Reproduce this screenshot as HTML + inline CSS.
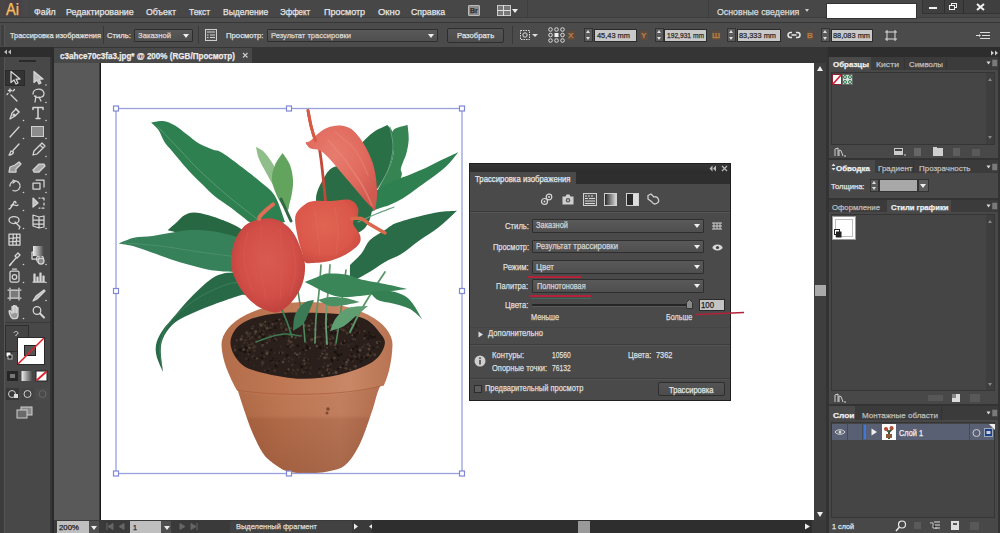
<!DOCTYPE html>
<html><head><meta charset="utf-8">
<style>
*{margin:0;padding:0;box-sizing:border-box}
html,body{width:1000px;height:533px;overflow:hidden;background:#474747;font-family:"Liberation Sans",sans-serif;color:#e6e6e6}
.a{position:absolute}
.t{position:absolute;white-space:pre;line-height:1;transform-origin:0 0;-webkit-text-stroke:0.25px currentColor}
.dd{position:absolute;background:linear-gradient(#595959,#4f4f4f);border:1px solid #2e2e2e;border-radius:1px}
.inp{position:absolute;background:#c9c9c9;border:1px solid #2a2a2a}
.tri{position:absolute;width:0;height:0;border-left:3px solid transparent;border-right:3px solid transparent;border-top:4px solid #eee}
.btn{position:absolute;background:linear-gradient(#545454,#4c4c4c);border:1px solid #2e2e2e;border-radius:2px}
.sep{position:absolute;background:#393939}
svg{position:absolute;overflow:visible}
</style></head><body>
<!-- ============ MENU BAR ============ -->
<div class="a" style="left:0;top:0;width:1000px;height:17px;background:#474747"></div>
<div class="a" style="left:0;top:17px;width:1000px;height:1px;background:#3d3d3d"></div>
<div class="a" style="left:0;top:18px;width:1000px;height:4px;background:#4e4e4e"></div>
<div class="a" style="left:0;top:22px;width:1000px;height:1px;background:#363636"></div>
<!-- Ai logo -->
<div class="a" style="left:0;top:0;width:27px;height:17px;background:linear-gradient(90deg,#4a4544,#443f48 60%,#4a4a4a)"></div>
<div class="t" style="left:5.5px;top:2px;font-size:16px;color:#eebc66;transform:scaleX(0.92);text-shadow:0 0 1px #a06a20">Ai</div>
<!-- Br / layout icons -->
<div class="a" style="left:468px;top:5px;width:12px;height:11px;background:#8d8d8d;border:1px solid #bbb;border-radius:1px"></div>
<div class="t" style="left:470px;top:7px;font-size:7px;font-weight:bold;color:#333">Br</div>
<div class="a" style="left:497px;top:5px;width:14px;height:11px;border:1px solid #c8c8c8;background:#777"></div>
<div class="a" style="left:503px;top:5px;width:1px;height:11px;background:#ddd"></div>
<div class="a" style="left:497px;top:10px;width:14px;height:1px;background:#ddd"></div>
<div class="tri" style="left:512px;top:9px;border-left-width:3px;border-right-width:3px;border-top-width:4px"></div>
<div class="a" style="left:527px;top:0;width:1px;height:17px;background:#3e3e3e"></div>
<div class="a" style="left:708px;top:0;width:1px;height:17px;background:#3e3e3e"></div>
<div class="tri" style="left:805px;top:9px;border-left-width:2.5px;border-right-width:2.5px;border-top-width:3px;border-top-color:#ccc"></div>
<!-- search box -->
<div class="a" style="left:826px;top:3px;width:91px;height:16px;background:#fff;border:1px solid #333"></div>
<!-- window buttons -->
<div class="a" style="left:922px;top:0;width:78px;height:14px;background:#3f3f3f;border-left:1px solid #333;border-bottom:1px solid #333"></div>
<div class="a" style="left:944px;top:0;width:1px;height:13px;background:#2e2e2e"></div>
<div class="a" style="left:963px;top:0;width:1px;height:13px;background:#2e2e2e"></div>
<div class="a" style="left:929px;top:7px;width:8px;height:2px;background:#f2f2f2"></div>
<div class="a" style="left:951px;top:3px;width:6px;height:5px;border:1.5px solid #f2f2f2"></div>
<div class="a" style="left:949px;top:5px;width:6px;height:5px;border:1.5px solid #f2f2f2;background:#3f3f3f"></div>
<svg style="left:976px;top:3px" width="9" height="8"><path d="M1 1L8 7M8 1L1 7" stroke="#f2f2f2" stroke-width="2"/></svg>

<!-- ============ CONTROL BAR ============ -->
<div class="a" style="left:0;top:23px;width:1000px;height:24px;background:#4b4b4b"></div>
<div class="a" style="left:1px;top:25px;width:4px;height:21px;background:#3f3f3f;border-right:1px solid #555"></div>
<div class="sep" style="left:103px;top:26px;width:1px;height:18px"></div>
<div class="dd" style="left:134px;top:29px;width:59px;height:13px"></div>
<div class="tri" style="left:183px;top:34px"></div>
<div class="sep" style="left:198px;top:26px;width:1px;height:18px"></div>
<svg style="left:205px;top:29px" width="12" height="12"><rect x="0.5" y="0.5" width="11" height="11" fill="#555" stroke="#cfcfcf"/><path d="M2 3h8M5 6h5M5 8.5h5M2 6h1.5M2 8.5h1.5" stroke="#cfcfcf"/></svg>
<div class="dd" style="left:267px;top:29px;width:171px;height:13px"></div>
<div class="tri" style="left:428px;top:34px"></div>
<div class="btn" style="left:447px;top:28px;width:57px;height:15px"></div>
<div class="sep" style="left:512px;top:26px;width:1px;height:18px"></div>
<svg style="left:519px;top:29px" width="22" height="12"><rect x="1.5" y="1.5" width="9" height="9" fill="none" stroke="#ddd" stroke-dasharray="1.5 1"/><circle cx="6" cy="6" r="2.2" fill="none" stroke="#ddd"/><path d="M13 5h6l-3 3z" fill="#ddd"/></svg>
<svg style="left:548px;top:27px" width="17" height="16"><g fill="none" stroke="#ddd" stroke-width="1"><circle cx="2.5" cy="2.5" r="1.8"/><circle cx="8.5" cy="2.5" r="1.8"/><circle cx="14.5" cy="2.5" r="1.8"/><circle cx="2.5" cy="8" r="1.8"/><circle cx="14.5" cy="8" r="1.8"/><circle cx="2.5" cy="13.5" r="1.8"/><circle cx="8.5" cy="13.5" r="1.8"/><circle cx="14.5" cy="13.5" r="1.8"/></g><rect x="6.5" y="6" width="4" height="4" fill="#eee"/></svg>
<div class="a" style="left:567px;top:31px;width:8px;height:9px;background:#5a4c40"></div>
<div class="t" style="left:568px;top:32px;font-size:8px;color:#b87a40;font-weight:bold">X</div>
<div class="a" style="left:584px;top:28px;width:9px;height:14px;background:#5a5a5a;border:1px solid #333"></div>
<div class="tri" style="left:586px;top:30px;border-top:0;border-bottom:3px solid #ddd;border-left-width:2.5px;border-right-width:2.5px"></div>
<div class="tri" style="left:586px;top:37px;border-top-width:3px;border-left-width:2.5px;border-right-width:2.5px;border-top-color:#ddd"></div>
<div class="inp" style="left:594px;top:29px;width:43px;height:13px"></div>
<div class="a" style="left:640px;top:31px;width:8px;height:9px;background:#5a4c40"></div>
<div class="t" style="left:641px;top:32px;font-size:8px;color:#b87a40;font-weight:bold">Y</div>
<div class="a" style="left:655px;top:28px;width:9px;height:14px;background:#5a5a5a;border:1px solid #333"></div>
<div class="tri" style="left:657px;top:30px;border-top:0;border-bottom:3px solid #ddd;border-left-width:2.5px;border-right-width:2.5px"></div>
<div class="tri" style="left:657px;top:37px;border-top-width:3px;border-left-width:2.5px;border-right-width:2.5px;border-top-color:#ddd"></div>
<div class="inp" style="left:664px;top:29px;width:43px;height:13px"></div>
<div class="a" style="left:712px;top:31px;width:8px;height:9px;background:#5a4c40"></div>
<div class="t" style="left:712px;top:32px;font-size:8px;color:#b87a40;font-weight:bold">Ш</div>
<div class="a" style="left:727px;top:28px;width:9px;height:14px;background:#5a5a5a;border:1px solid #333"></div>
<div class="tri" style="left:729px;top:30px;border-top:0;border-bottom:3px solid #ddd;border-left-width:2.5px;border-right-width:2.5px"></div>
<div class="tri" style="left:729px;top:37px;border-top-width:3px;border-left-width:2.5px;border-right-width:2.5px;border-top-color:#ddd"></div>
<div class="inp" style="left:737px;top:29px;width:44px;height:13px"></div>
<svg style="left:787px;top:30px" width="14" height="10"><path d="M5 2.5H3.5a2.5 2.5 0 0 0 0 5H5M9 2.5h1.5a2.5 2.5 0 0 1 0 5H9M4.5 5h5" fill="none" stroke="#e8e8e8" stroke-width="1.5"/></svg>
<div class="a" style="left:807px;top:31px;width:6px;height:9px;background:#5a4c40"></div>
<div class="t" style="left:807px;top:32px;font-size:8px;color:#b87a40;font-weight:bold">В</div>
<div class="a" style="left:821px;top:28px;width:9px;height:14px;background:#5a5a5a;border:1px solid #333"></div>
<div class="tri" style="left:823px;top:30px;border-top:0;border-bottom:3px solid #ddd;border-left-width:2.5px;border-right-width:2.5px"></div>
<div class="tri" style="left:823px;top:37px;border-top-width:3px;border-left-width:2.5px;border-right-width:2.5px;border-top-color:#ddd"></div>
<div class="inp" style="left:831px;top:29px;width:42px;height:13px"></div>
<svg style="left:885px;top:30px" width="12" height="11"><rect x="2" y="2" width="8" height="7" fill="none" stroke="#ddd"/><path d="M0 2h2M10 2h2M0 9h2M10 9h2M2 0v2M10 0v2M2 9v2M10 9v2" stroke="#ddd"/></svg>
<svg style="left:976px;top:31px" width="15" height="9"><path d="M0 4.5h3M4 1.5h10M6 4.5h8M4 7.5h10" stroke="#ddd" stroke-width="1.2"/><path d="M3 3l2 1.5-2 1.5z" fill="#ddd"/></svg>

<!-- ============ DOC TAB BAR ============ -->
<div class="a" style="left:54px;top:47px;width:774px;height:16px;background:#353535"></div>
<div class="a" style="left:54px;top:48px;width:198px;height:15px;background:#484848"></div>
<svg style="left:242px;top:52px" width="7" height="7"><path d="M1 1L5.5 5.5M5.5 1L1 5.5" stroke="#cfcfcf" stroke-width="1.1"/></svg>

<!-- ============ CANVAS ============ -->
<div class="a" style="left:54px;top:63px;width:760px;height:457px;background:#595959"></div>
<div class="a" style="left:99px;top:63px;width:1px;height:457px;background:#3a3a3a"></div><div class="a" style="left:100px;top:63px;width:1px;height:457px;background:#1a1a1a"></div>
<div class="a" style="left:101px;top:63px;width:713px;height:457px;background:#fff"></div>
<!-- ============ PLANT ============ -->
<svg style="left:0;top:0" width="1000" height="533" viewBox="0 0 1000 533">
<defs>
<linearGradient id="potb" x1="0" x2="1"><stop offset="0" stop-color="#a8623f"/><stop offset="0.3" stop-color="#b8714d"/><stop offset="0.7" stop-color="#bf7c5c"/><stop offset="1" stop-color="#ab6748"/></linearGradient>
<linearGradient id="potv" x1="0" y1="0" x2="0" y2="1"><stop offset="0" stop-color="#d49470" stop-opacity="0.2"/><stop offset="0.38" stop-color="#d49470" stop-opacity="0.1"/><stop offset="0.43" stop-color="#8a4a30" stop-opacity="0.2"/><stop offset="1" stop-color="#7a4028" stop-opacity="0.35"/></linearGradient>
<radialGradient id="sp1" cx="0.5" cy="0.45" r="0.6"><stop offset="0" stop-color="#d95b50"/><stop offset="0.65" stop-color="#d14e47"/><stop offset="1" stop-color="#bb3f3a"/></radialGradient>
<radialGradient id="sp2" cx="0.45" cy="0.4" r="0.65"><stop offset="0" stop-color="#e06452"/><stop offset="0.7" stop-color="#da5749"/><stop offset="1" stop-color="#c94a40"/></radialGradient>
<radialGradient id="sp3" cx="0.4" cy="0.35" r="0.7"><stop offset="0" stop-color="#e77c6e"/><stop offset="0.6" stop-color="#e06a5e"/><stop offset="1" stop-color="#d05a50"/></radialGradient>
<linearGradient id="potr" x1="0" x2="1"><stop offset="0" stop-color="#b26d4a"/><stop offset="0.35" stop-color="#c07854"/><stop offset="0.75" stop-color="#c88766"/><stop offset="1" stop-color="#b87352"/></linearGradient>
</defs>
<path d="M387.3,125.1 C385.1,126.2 377.6,129.4 373.8,131.9 C370.1,134.4 368.4,136.0 364.8,139.8 C361.2,143.7 356.1,150.0 352.0,155.0 C347.9,160.0 343.7,163.3 340.0,170.0 C336.3,176.7 332.0,187.5 330.0,195.0 C328.0,202.5 328.3,211.7 328.0,215.0 C330.8,216.7 339.3,225.5 345.0,225.0 C350.7,224.5 356.7,217.9 362.0,212.0 C367.3,206.1 373.5,194.6 377.0,189.3 C380.5,184.0 380.5,184.4 382.8,180.3 C385.1,176.2 388.8,169.8 390.7,164.5 C392.6,159.2 393.6,154.1 394.0,148.8 C394.4,143.6 394.1,136.9 393.0,133.0 C391.9,129.1 388.2,126.4 387.3,125.1 Z" fill="#2a7046" />
<path d="M407.6,125.1 C405.2,126.0 395.3,126.9 393.0,130.8 C390.7,134.8 394.4,143.2 394.0,148.8 C393.6,154.4 392.6,159.2 390.7,164.5 C388.8,169.8 385.1,175.2 382.8,180.3 C380.5,185.4 376.6,190.9 377.0,195.0 C377.4,199.1 383.7,203.3 385.0,205.0 C387.6,200.5 398.2,184.0 400.8,178.0 C403.4,172.0 400.4,171.6 400.8,169.0 C401.2,166.4 402.1,164.9 403.0,162.3 C403.9,159.7 405.4,157.1 406.4,153.3 C407.3,149.6 408.5,144.5 408.7,139.8 C408.9,135.1 407.8,127.5 407.6,125.1 Z" fill="#358452" />
<path d="M390.0,127.0 C390.5,130.5 393.3,140.8 393.0,148.0 C392.7,155.2 390.5,163.3 388.0,170.0 C385.5,176.7 379.7,185.0 378.0,188.0" fill="none" stroke="#6aa584" stroke-width="0.9" stroke-linecap="round" />
<path d="M458.2,152.2 C455.4,153.5 446.8,157.4 441.4,160.0 C436.0,162.6 430.9,165.6 425.6,168.0 C420.3,170.4 413.9,173.0 409.8,174.7 C405.7,176.4 404.9,176.3 400.8,178.0 C396.7,179.7 390.1,182.2 385.0,185.0 C379.9,187.8 375.0,191.7 370.0,195.0 C365.0,198.3 357.5,203.3 355.0,205.0 C354.5,207.8 348.5,221.2 352.0,222.0 C355.5,222.8 369.8,212.4 376.0,209.6 C382.2,206.8 385.0,206.9 389.5,205.0 C394.0,203.1 398.1,201.3 403.0,198.3 C407.9,195.3 413.5,190.8 418.8,187.0 C424.1,183.2 429.7,179.6 434.6,175.8 C439.5,172.1 444.1,168.4 448.0,164.5 C451.9,160.6 456.5,154.2 458.2,152.2 Z" fill="#2f8050" />
<path d="M316.0,199.0 C316.0,190.8 322.0,181.3 325.0,176.0 C328.0,170.7 330.7,168.3 334.0,167.0 C337.3,165.7 340.7,165.0 345.0,168.0 C349.3,171.0 355.5,178.8 360.0,185.0 C364.5,191.2 371.2,197.8 372.0,205.0 C372.8,212.2 369.5,223.0 365.0,228.0 C360.5,233.0 351.7,235.5 345.0,235.0 C338.3,234.5 329.8,231.0 325.0,225.0 C320.2,219.0 316.0,207.2 316.0,199.0 Z" fill="#2a6c45" />
<path d="M358.0,222.0 C361.0,220.7 370.0,216.5 376.0,214.0 C382.0,211.5 391.0,208.2 394.0,207.0" fill="none" stroke="#6aa584" stroke-width="1.2" stroke-linecap="round" />
<path d="M457.0,210.7 C454.4,210.9 447.8,210.9 441.4,211.8 C435.0,212.8 426.3,214.5 418.8,216.4 C411.3,218.3 401.9,220.8 396.3,223.0 C390.7,225.2 389.4,227.1 385.0,229.9 C380.6,232.7 373.9,236.2 370.0,240.0 C366.1,243.8 365.1,248.8 361.8,253.0 C358.5,257.2 352.0,263.0 350.0,265.0 C350.3,267.5 348.9,278.6 351.7,280.0 C354.5,281.4 361.3,276.5 366.9,273.5 C372.4,270.5 379.1,265.4 385.0,262.0 C390.9,258.6 396.6,257.0 402.4,253.3 C408.2,249.6 414.1,244.2 420.0,240.0 C425.9,235.8 431.6,232.9 437.8,228.0 C444.0,223.1 453.8,213.6 457.0,210.7 Z" fill="#2a6c47" />
<path d="M151.0,122.5 C153.0,122.2 159.0,120.5 163.0,121.0 C167.0,121.5 171.0,123.2 175.0,125.5 C179.0,127.8 183.0,131.5 187.0,134.5 C191.0,137.5 194.7,141.0 199.0,143.5 C203.3,146.0 208.7,147.9 212.6,149.5 C216.5,151.1 217.1,149.7 222.5,153.0 C227.9,156.3 238.8,164.8 245.0,169.5 C251.2,174.2 255.7,178.0 260.0,181.5 C264.3,185.0 267.8,187.4 270.6,190.5 C273.4,193.6 274.6,194.8 277.0,200.0 C279.4,205.2 283.7,218.3 285.0,222.0 C281.2,223.0 267.9,228.0 262.0,228.0 C256.1,228.0 252.6,223.8 249.5,222.0 C246.4,220.2 246.8,220.0 243.5,217.5 C240.2,215.0 234.8,210.5 230.0,207.0 C225.2,203.5 219.7,200.3 215.0,196.5 C210.3,192.7 206.4,188.3 202.0,184.0 C197.6,179.7 192.2,174.5 188.5,170.5 C184.8,166.5 182.2,163.2 179.5,160.0 C176.8,156.8 174.5,154.0 172.0,151.0 C169.5,148.0 166.8,145.5 164.5,142.0 C162.2,138.5 160.8,133.2 158.5,130.0 C156.2,126.8 152.2,123.8 151.0,122.5 Z" fill="#2f8050" />
<path d="M158.0,127.0 C161.7,130.8 173.0,142.7 180.0,150.0 C187.0,157.3 192.0,163.3 200.0,171.0 C208.0,178.7 218.5,188.0 228.0,196.0 C237.5,204.0 252.2,215.2 257.0,219.0" fill="none" stroke="#5c9b77" stroke-width="0.9" stroke-linecap="round" />
<path d="M256.0,147.0 C256.5,149.0 257.3,154.8 259.0,159.0 C260.7,163.2 263.6,168.0 266.0,172.5 C268.4,177.0 271.0,181.6 273.5,186.0 C276.0,190.4 278.5,195.0 281.0,199.0 C283.5,203.0 287.3,208.2 288.6,210.0 C288.7,208.3 289.6,203.7 289.0,200.0 C288.4,196.3 286.7,192.2 285.0,188.0 C283.3,183.8 281.3,179.5 279.0,175.0 C276.7,170.5 273.7,165.0 271.0,161.0 C268.3,157.0 265.5,153.3 263.0,151.0 C260.5,148.7 257.2,147.7 256.0,147.0 Z" fill="#8fbe8a" />
<path d="M282.6,153.0 C281.3,155.0 276.8,160.5 275.0,165.0 C273.2,169.5 271.5,174.5 272.0,180.0 C272.5,185.5 275.5,192.7 278.0,198.0 C280.5,203.3 285.5,209.7 287.0,212.0 C287.8,209.2 290.6,200.3 291.6,195.0 C292.6,189.7 293.3,185.0 293.0,180.0 C292.7,175.0 291.7,169.5 290.0,165.0 C288.3,160.5 283.8,155.0 282.6,153.0 Z" fill="#62a35e" />
<path d="M281.0,199.0 C281.8,200.8 284.3,206.3 286.0,210.0 C287.7,213.7 290.2,219.2 291.0,221.0" fill="none" stroke="#2f6a45" stroke-width="3" stroke-linecap="round" />
<path d="M167.5,230.3 C169.1,228.9 174.2,224.5 177.0,222.0 C179.8,219.5 181.6,216.9 184.4,215.3 C187.2,213.7 189.7,212.5 193.8,212.5 C197.9,212.5 203.2,213.7 208.8,215.3 C214.4,216.9 222.6,220.0 227.6,222.0 C232.6,224.0 235.1,225.2 238.8,227.5 C242.5,229.8 248.1,234.6 250.0,236.0 C249.2,238.3 253.3,249.7 245.0,250.0 C236.7,250.3 212.9,241.3 200.0,238.0 C187.1,234.7 172.9,231.6 167.5,230.3 Z" fill="#276842" />
<path d="M118.8,243.5 C121.3,242.6 128.2,239.1 133.8,237.8 C139.4,236.6 146.6,236.8 152.5,236.0 C158.4,235.2 163.2,234.0 169.4,233.0 C175.7,232.0 182.8,230.3 190.0,230.0 C197.2,229.7 204.8,230.1 212.6,231.3 C220.4,232.5 229.9,234.7 237.0,237.0 C244.1,239.3 252.0,243.7 255.0,245.0 C254.5,249.2 255.3,265.6 252.0,270.0 C248.7,274.4 239.1,271.3 235.0,271.6 C230.9,271.9 232.0,271.9 227.6,271.6 C223.2,271.3 215.1,270.8 208.8,269.7 C202.5,268.6 196.2,266.7 190.0,265.0 C183.8,263.3 177.6,261.4 171.3,259.4 C165.1,257.4 158.8,255.0 152.5,252.8 C146.2,250.6 139.4,247.9 133.8,246.3 C128.2,244.8 121.3,244.0 118.8,243.5 Z" fill="#36805a" />
<path d="M125.0,243.0 C130.8,243.5 147.5,244.5 160.0,246.0 C172.5,247.5 185.8,250.0 200.0,252.0 C214.2,254.0 237.5,257.0 245.0,258.0" fill="none" stroke="#5c9a78" stroke-width="0.8" stroke-linecap="round" opacity="0.7"/>
<path d="M163.0,372.0 C161.9,369.3 157.6,360.6 156.5,355.7 C155.4,350.8 155.4,347.1 156.5,342.8 C157.6,338.5 160.1,334.1 163.0,329.8 C165.9,325.5 169.9,321.5 173.8,316.8 C177.8,312.1 182.4,306.4 186.7,301.7 C191.0,297.0 195.4,292.8 199.7,288.8 C204.0,284.9 208.6,280.5 212.6,278.0 C216.6,275.5 220.2,274.5 223.4,273.6 C226.6,272.7 228.4,272.9 232.0,272.6 C235.6,272.3 242.8,272.1 245.0,272.0 C245.5,275.5 248.7,289.1 248.0,293.0 C247.3,296.9 245.1,293.8 240.7,295.2 C236.2,296.6 227.4,299.5 221.3,301.7 C215.2,303.9 210.1,305.7 204.0,308.2 C197.9,310.7 190.0,313.9 184.6,316.8 C179.2,319.7 175.2,321.9 171.6,325.5 C168.0,329.1 164.8,334.1 163.0,338.4 C161.2,342.7 160.8,345.8 160.8,351.4 C160.8,357.0 162.6,368.6 163.0,372.0 Z" fill="#286a47" />
<path d="M162.0,368.0 C161.7,364.2 158.7,352.7 160.0,345.0 C161.3,337.3 164.2,329.5 170.0,322.0 C175.8,314.5 185.8,306.2 195.0,300.0 C204.2,293.8 216.8,288.0 225.0,285.0 C233.2,282.0 240.8,282.5 244.0,282.0" fill="none" stroke="#4f8a68" stroke-width="0.8" stroke-linecap="round" opacity="0.7"/>
<path d="M236.7,386.5 C237.9,390.3 241.3,401.7 243.9,409.3 C246.5,416.9 249.1,424.8 252.2,432.0 C255.3,439.2 259.1,447.4 262.5,452.6 C265.9,457.8 268.8,459.9 272.9,463.0 C277.0,466.1 281.4,469.5 287.3,471.2 C293.2,472.9 301.1,473.3 308.0,473.3 C314.9,473.3 322.4,472.6 328.6,471.2 C334.8,469.8 340.0,469.5 345.2,465.0 C350.4,460.5 355.1,453.3 359.6,444.4 C364.1,435.4 368.9,420.2 372.0,411.3 C375.1,402.4 376.1,396.2 378.2,390.7 C380.3,385.2 383.4,380.4 384.4,378.3 C372.0,380.6 334.6,390.6 310.0,392.0 C285.4,393.4 248.9,387.4 236.7,386.5 Z" fill="url(#potb)"/>
<path d="M236.7,386.5 C237.9,390.3 241.3,401.7 243.9,409.3 C246.5,416.9 249.1,424.8 252.2,432.0 C255.3,439.2 259.1,447.4 262.5,452.6 C265.9,457.8 268.8,459.9 272.9,463.0 C277.0,466.1 281.4,469.5 287.3,471.2 C293.2,472.9 301.1,473.3 308.0,473.3 C314.9,473.3 322.4,472.6 328.6,471.2 C334.8,469.8 340.0,469.5 345.2,465.0 C350.4,460.5 355.1,453.3 359.6,444.4 C364.1,435.4 368.9,420.2 372.0,411.3 C375.1,402.4 376.1,396.2 378.2,390.7 C380.3,385.2 383.4,380.4 384.4,378.3 C372.0,380.6 334.6,390.6 310.0,392.0 C285.4,393.4 248.9,387.4 236.7,386.5 Z" fill="url(#potv)"/>
<path d="M221.5,345 A85.5,43 0 0 1 392.5,345 C392,360 389,374 384,385 C345,396 310,398 270,396 C250,394 240,392 236.7,390 C229,376 222,360 221.5,345 Z" fill="url(#potr)"/>
<path d="M237,390 C270,396 345,397 384,385" stroke="#a55c3b" stroke-width="1" fill="none" opacity="0.7"/>
<path d="M230.5,343.7 C230.2,337.1 233.8,329.8 239.8,325.0 C245.8,320.2 255.3,316.9 266.7,314.8 C278.1,312.8 292.5,312.4 308.0,312.7 C323.5,313.0 347.6,313.4 359.6,316.9 C371.7,320.3 376.2,328.6 380.3,333.4 C384.4,338.2 385.8,341.0 384.4,345.8 C383.0,350.6 379.6,357.5 372.0,362.3 C364.4,367.1 350.7,371.9 339.0,374.7 C327.3,377.4 313.9,379.0 301.8,378.8 C289.8,378.6 276.7,376.1 266.7,373.7 C256.7,371.3 247.9,369.4 241.9,364.4 C235.9,359.4 230.8,350.3 230.5,343.7 Z" fill="#2a1f1a"/>
<g><circle cx="281.2" cy="323.7" r="1.3" fill="#4a3a30"/><circle cx="320.6" cy="372.2" r="0.9" fill="#4a3a30"/><circle cx="297.9" cy="318.5" r="0.8" fill="#1a1310"/><circle cx="241.0" cy="350.2" r="1.6" fill="#1a1310"/><circle cx="327.4" cy="374.7" r="1.2" fill="#1a1310"/><circle cx="316.6" cy="322.5" r="1.1" fill="#352a23"/><circle cx="249.9" cy="333.7" r="1.4" fill="#3f3129"/><circle cx="247.7" cy="350.6" r="0.9" fill="#4a3a30"/><circle cx="315.3" cy="318.0" r="0.8" fill="#3f3129"/><circle cx="307.5" cy="348.0" r="1.4" fill="#1a1310"/><circle cx="321.0" cy="343.0" r="1.0" fill="#3f3129"/><circle cx="338.2" cy="329.6" r="1.2" fill="#352a23"/><circle cx="307.3" cy="336.0" r="1.1" fill="#352a23"/><circle cx="295.6" cy="362.5" r="0.8" fill="#1a1310"/><circle cx="243.8" cy="349.7" r="1.4" fill="#54443a"/><circle cx="283.7" cy="336.4" r="1.1" fill="#1a1310"/><circle cx="273.0" cy="358.6" r="0.8" fill="#1a1310"/><circle cx="338.6" cy="355.4" r="1.6" fill="#1a1310"/><circle cx="275.3" cy="338.7" r="1.3" fill="#4a3a30"/><circle cx="375.0" cy="336.7" r="1.2" fill="#1a1310"/><circle cx="251.7" cy="329.8" r="1.1" fill="#1a1310"/><circle cx="244.2" cy="342.7" r="1.2" fill="#3f3129"/><circle cx="274.3" cy="340.6" r="1.0" fill="#1a1310"/><circle cx="258.8" cy="328.8" r="0.9" fill="#1a1310"/><circle cx="358.3" cy="325.7" r="1.0" fill="#3f3129"/><circle cx="295.7" cy="337.6" r="1.2" fill="#3f3129"/><circle cx="337.0" cy="347.0" r="1.3" fill="#1a1310"/><circle cx="344.4" cy="343.2" r="1.5" fill="#1a1310"/><circle cx="353.3" cy="339.1" r="1.1" fill="#4a3a30"/><circle cx="305.2" cy="339.6" r="0.9" fill="#3f3129"/><circle cx="299.0" cy="321.0" r="1.2" fill="#4a3a30"/><circle cx="247.4" cy="337.3" r="0.7" fill="#3f3129"/><circle cx="325.3" cy="323.5" r="0.9" fill="#54443a"/><circle cx="323.5" cy="344.3" r="0.8" fill="#1a1310"/><circle cx="305.5" cy="319.5" r="0.8" fill="#54443a"/><circle cx="344.5" cy="344.6" r="1.3" fill="#352a23"/><circle cx="312.3" cy="323.4" r="1.2" fill="#4a3a30"/><circle cx="347.2" cy="333.1" r="1.3" fill="#4a3a30"/><circle cx="337.8" cy="330.7" r="1.0" fill="#3f3129"/><circle cx="286.1" cy="328.3" r="1.2" fill="#352a23"/><circle cx="282.1" cy="328.3" r="1.4" fill="#3f3129"/><circle cx="354.5" cy="366.4" r="1.4" fill="#3f3129"/><circle cx="262.4" cy="345.5" r="1.4" fill="#4a3a30"/><circle cx="352.1" cy="344.2" r="0.9" fill="#352a23"/><circle cx="377.4" cy="342.6" r="1.5" fill="#54443a"/><circle cx="265.5" cy="328.5" r="0.9" fill="#3f3129"/><circle cx="370.2" cy="336.0" r="1.3" fill="#1a1310"/><circle cx="250.2" cy="338.9" r="1.3" fill="#3f3129"/><circle cx="304.7" cy="325.4" r="1.4" fill="#54443a"/><circle cx="341.7" cy="343.6" r="1.4" fill="#4a3a30"/><circle cx="342.2" cy="324.9" r="0.8" fill="#3f3129"/><circle cx="321.8" cy="343.8" r="1.3" fill="#352a23"/><circle cx="331.9" cy="336.4" r="1.2" fill="#3f3129"/><circle cx="342.4" cy="320.6" r="1.4" fill="#3f3129"/><circle cx="297.9" cy="369.8" r="1.4" fill="#3f3129"/><circle cx="308.2" cy="362.9" r="1.0" fill="#352a23"/><circle cx="295.7" cy="322.4" r="1.5" fill="#54443a"/><circle cx="368.5" cy="356.4" r="1.4" fill="#352a23"/><circle cx="295.9" cy="372.7" r="1.2" fill="#352a23"/><circle cx="255.1" cy="346.7" r="1.5" fill="#3f3129"/><circle cx="324.5" cy="363.7" r="0.8" fill="#3f3129"/><circle cx="304.0" cy="360.4" r="1.2" fill="#54443a"/><circle cx="335.7" cy="348.0" r="1.1" fill="#4a3a30"/><circle cx="246.9" cy="342.9" r="0.7" fill="#4a3a30"/><circle cx="299.4" cy="353.2" r="1.2" fill="#352a23"/><circle cx="262.3" cy="331.7" r="1.2" fill="#1a1310"/><circle cx="309.2" cy="329.8" r="1.2" fill="#54443a"/><circle cx="262.8" cy="342.6" r="1.1" fill="#1a1310"/><circle cx="299.2" cy="318.6" r="0.9" fill="#4a3a30"/><circle cx="264.3" cy="333.4" r="0.8" fill="#3f3129"/><circle cx="374.8" cy="355.2" r="1.0" fill="#54443a"/><circle cx="292.5" cy="345.2" r="1.6" fill="#3f3129"/><circle cx="256.5" cy="341.6" r="1.2" fill="#54443a"/><circle cx="296.0" cy="336.8" r="0.8" fill="#54443a"/><circle cx="235.0" cy="349.5" r="1.1" fill="#4a3a30"/><circle cx="290.4" cy="347.1" r="1.0" fill="#4a3a30"/><circle cx="266.7" cy="370.1" r="0.8" fill="#54443a"/><circle cx="273.1" cy="322.3" r="1.1" fill="#1a1310"/><circle cx="356.5" cy="330.6" r="0.8" fill="#352a23"/><circle cx="318.7" cy="358.8" r="0.8" fill="#4a3a30"/><circle cx="353.5" cy="325.7" r="1.5" fill="#54443a"/><circle cx="374.6" cy="354.6" r="1.4" fill="#4a3a30"/><circle cx="324.4" cy="328.2" r="0.9" fill="#4a3a30"/><circle cx="301.0" cy="335.7" r="1.2" fill="#54443a"/><circle cx="327.6" cy="348.0" r="0.9" fill="#1a1310"/><circle cx="308.0" cy="325.4" r="1.0" fill="#4a3a30"/><circle cx="234.8" cy="346.4" r="1.6" fill="#352a23"/><circle cx="304.2" cy="373.8" r="0.8" fill="#1a1310"/><circle cx="297.7" cy="345.7" r="1.5" fill="#1a1310"/><circle cx="264.7" cy="328.7" r="0.9" fill="#1a1310"/><circle cx="342.8" cy="322.9" r="1.6" fill="#4a3a30"/><circle cx="327.1" cy="370.3" r="1.1" fill="#4a3a30"/><circle cx="364.3" cy="356.9" r="1.0" fill="#3f3129"/><circle cx="260.2" cy="331.2" r="0.7" fill="#54443a"/><circle cx="315.2" cy="329.6" r="1.6" fill="#54443a"/><circle cx="265.1" cy="325.7" r="1.0" fill="#4a3a30"/><circle cx="304.1" cy="346.2" r="0.9" fill="#352a23"/><circle cx="321.2" cy="339.2" r="1.0" fill="#1a1310"/><circle cx="267.4" cy="351.5" r="1.2" fill="#3f3129"/><circle cx="331.9" cy="359.8" r="1.5" fill="#1a1310"/><circle cx="348.2" cy="360.1" r="1.1" fill="#54443a"/><circle cx="342.1" cy="355.2" r="0.7" fill="#1a1310"/><circle cx="367.6" cy="354.1" r="1.4" fill="#352a23"/><circle cx="253.2" cy="347.5" r="1.2" fill="#4a3a30"/><circle cx="357.6" cy="351.4" r="1.5" fill="#1a1310"/><circle cx="289.2" cy="342.9" r="0.7" fill="#4a3a30"/><circle cx="327.2" cy="357.6" r="1.1" fill="#4a3a30"/><circle cx="301.5" cy="318.5" r="1.5" fill="#352a23"/><circle cx="246.0" cy="347.7" r="1.4" fill="#1a1310"/><circle cx="272.4" cy="360.7" r="0.9" fill="#1a1310"/><circle cx="330.8" cy="343.5" r="1.5" fill="#4a3a30"/><circle cx="304.8" cy="357.8" r="1.4" fill="#352a23"/><circle cx="328.2" cy="326.7" r="1.2" fill="#54443a"/><circle cx="270.6" cy="361.6" r="1.0" fill="#352a23"/><circle cx="252.3" cy="344.9" r="1.1" fill="#1a1310"/><circle cx="306.4" cy="359.4" r="1.0" fill="#1a1310"/><circle cx="302.9" cy="321.6" r="1.5" fill="#3f3129"/><circle cx="279.4" cy="319.5" r="1.1" fill="#54443a"/><circle cx="301.8" cy="366.5" r="1.6" fill="#1a1310"/><circle cx="345.6" cy="330.8" r="1.0" fill="#352a23"/><circle cx="356.7" cy="346.6" r="1.5" fill="#1a1310"/><circle cx="287.5" cy="345.9" r="1.5" fill="#1a1310"/><circle cx="306.7" cy="342.8" r="1.0" fill="#3f3129"/><circle cx="295.3" cy="338.1" r="0.8" fill="#54443a"/><circle cx="369.0" cy="332.5" r="1.0" fill="#1a1310"/><circle cx="291.3" cy="369.7" r="0.8" fill="#1a1310"/><circle cx="346.9" cy="368.7" r="1.0" fill="#4a3a30"/><circle cx="358.9" cy="332.3" r="1.5" fill="#3f3129"/><circle cx="379.6" cy="341.9" r="1.0" fill="#54443a"/><circle cx="351.3" cy="341.4" r="0.7" fill="#1a1310"/><circle cx="292.8" cy="370.0" r="1.2" fill="#3f3129"/><circle cx="343.3" cy="342.9" r="1.4" fill="#1a1310"/><circle cx="364.2" cy="345.1" r="1.5" fill="#352a23"/><circle cx="251.4" cy="344.2" r="1.0" fill="#54443a"/><circle cx="270.9" cy="361.3" r="1.3" fill="#1a1310"/><circle cx="331.7" cy="333.3" r="1.2" fill="#1a1310"/><circle cx="250.2" cy="355.2" r="0.8" fill="#352a23"/><circle cx="369.7" cy="345.8" r="0.9" fill="#54443a"/><circle cx="253.2" cy="326.3" r="0.8" fill="#54443a"/><circle cx="316.5" cy="334.4" r="1.0" fill="#352a23"/><circle cx="364.3" cy="338.5" r="1.4" fill="#3f3129"/><circle cx="289.3" cy="335.6" r="0.8" fill="#54443a"/><circle cx="319.3" cy="337.0" r="1.3" fill="#352a23"/><circle cx="327.7" cy="369.2" r="0.9" fill="#54443a"/><circle cx="368.3" cy="338.6" r="1.3" fill="#1a1310"/><circle cx="368.1" cy="344.3" r="1.2" fill="#4a3a30"/><circle cx="373.1" cy="347.8" r="1.1" fill="#1a1310"/><circle cx="269.8" cy="321.0" r="0.8" fill="#352a23"/><circle cx="357.5" cy="358.9" r="1.5" fill="#1a1310"/><circle cx="327.2" cy="347.8" r="1.1" fill="#4a3a30"/><circle cx="247.1" cy="333.2" r="1.5" fill="#3f3129"/><circle cx="291.0" cy="328.3" r="1.2" fill="#4a3a30"/><circle cx="274.3" cy="334.2" r="1.5" fill="#3f3129"/><circle cx="304.2" cy="329.0" r="0.9" fill="#1a1310"/><circle cx="339.1" cy="333.7" r="0.7" fill="#1a1310"/><circle cx="366.5" cy="355.4" r="0.8" fill="#3f3129"/><circle cx="333.4" cy="373.2" r="0.9" fill="#4a3a30"/><circle cx="337.8" cy="360.0" r="1.0" fill="#1a1310"/><circle cx="262.1" cy="365.0" r="1.4" fill="#352a23"/><circle cx="242.2" cy="345.7" r="0.9" fill="#3f3129"/><circle cx="267.1" cy="328.2" r="1.4" fill="#54443a"/><circle cx="248.6" cy="353.9" r="1.2" fill="#3f3129"/><circle cx="305.7" cy="372.3" r="0.8" fill="#352a23"/><circle cx="254.3" cy="339.2" r="0.9" fill="#352a23"/><circle cx="241.1" cy="339.2" r="1.5" fill="#54443a"/><circle cx="373.6" cy="335.1" r="0.9" fill="#352a23"/><circle cx="333.0" cy="338.2" r="1.0" fill="#54443a"/><circle cx="299.3" cy="321.0" r="0.8" fill="#4a3a30"/><circle cx="263.5" cy="336.8" r="1.4" fill="#1a1310"/><circle cx="245.3" cy="359.1" r="0.9" fill="#352a23"/><circle cx="287.4" cy="371.4" r="0.7" fill="#1a1310"/><circle cx="269.7" cy="354.0" r="1.1" fill="#1a1310"/><circle cx="283.5" cy="331.4" r="1.6" fill="#352a23"/><circle cx="336.8" cy="373.2" r="1.0" fill="#1a1310"/><circle cx="328.4" cy="374.4" r="0.7" fill="#3f3129"/><circle cx="248.3" cy="359.8" r="1.1" fill="#1a1310"/><circle cx="337.2" cy="323.7" r="0.9" fill="#54443a"/><circle cx="302.0" cy="364.2" r="1.2" fill="#352a23"/><circle cx="262.0" cy="362.2" r="0.9" fill="#4a3a30"/><circle cx="330.7" cy="344.8" r="1.2" fill="#3f3129"/><circle cx="307.8" cy="359.4" r="1.1" fill="#3f3129"/><circle cx="252.2" cy="343.5" r="1.5" fill="#3f3129"/><circle cx="345.7" cy="368.2" r="1.3" fill="#4a3a30"/><circle cx="350.5" cy="332.8" r="1.0" fill="#54443a"/><circle cx="288.7" cy="361.2" r="0.9" fill="#3f3129"/><circle cx="260.2" cy="329.1" r="1.0" fill="#352a23"/><circle cx="270.3" cy="329.7" r="1.2" fill="#1a1310"/><circle cx="354.9" cy="355.8" r="1.6" fill="#4a3a30"/><circle cx="267.1" cy="342.7" r="1.0" fill="#54443a"/><circle cx="323.3" cy="367.0" r="0.9" fill="#4a3a30"/><circle cx="288.6" cy="369.4" r="1.1" fill="#54443a"/><circle cx="349.8" cy="356.5" r="0.7" fill="#1a1310"/><circle cx="322.6" cy="353.7" r="0.9" fill="#54443a"/><circle cx="355.8" cy="366.4" r="1.1" fill="#54443a"/><circle cx="260.1" cy="334.0" r="0.9" fill="#1a1310"/><circle cx="315.3" cy="318.0" r="0.8" fill="#1a1310"/><circle cx="332.9" cy="323.9" r="1.2" fill="#1a1310"/><circle cx="256.9" cy="358.5" r="1.1" fill="#54443a"/><circle cx="333.5" cy="340.7" r="0.7" fill="#1a1310"/><circle cx="318.1" cy="336.9" r="1.1" fill="#54443a"/><circle cx="330.0" cy="339.0" r="1.1" fill="#4a3a30"/><circle cx="298.0" cy="324.0" r="0.8" fill="#4a3a30"/><circle cx="293.7" cy="370.5" r="1.1" fill="#3f3129"/><circle cx="253.7" cy="365.6" r="1.1" fill="#352a23"/><circle cx="326.6" cy="337.7" r="1.2" fill="#3f3129"/><circle cx="284.9" cy="324.4" r="0.9" fill="#4a3a30"/><circle cx="248.5" cy="345.4" r="1.4" fill="#3f3129"/><circle cx="277.8" cy="367.6" r="0.7" fill="#1a1310"/><circle cx="279.8" cy="352.9" r="1.3" fill="#4a3a30"/><circle cx="369.4" cy="353.7" r="1.4" fill="#3f3129"/><circle cx="329.3" cy="368.8" r="1.3" fill="#352a23"/><circle cx="259.8" cy="328.0" r="1.1" fill="#352a23"/><circle cx="255.8" cy="337.0" r="0.8" fill="#1a1310"/><circle cx="356.0" cy="326.3" r="1.5" fill="#1a1310"/><circle cx="249.9" cy="352.4" r="1.2" fill="#1a1310"/><circle cx="350.3" cy="355.5" r="1.0" fill="#3f3129"/><circle cx="296.7" cy="356.2" r="1.1" fill="#1a1310"/><circle cx="299.9" cy="353.6" r="1.4" fill="#3f3129"/><circle cx="355.2" cy="339.6" r="0.8" fill="#54443a"/><circle cx="297.5" cy="319.9" r="1.1" fill="#352a23"/><circle cx="279.7" cy="360.1" r="0.8" fill="#352a23"/><circle cx="368.0" cy="355.8" r="1.4" fill="#4a3a30"/><circle cx="343.3" cy="366.2" r="0.9" fill="#1a1310"/><circle cx="275.8" cy="365.9" r="1.4" fill="#1a1310"/><circle cx="242.0" cy="336.5" r="1.4" fill="#3f3129"/><circle cx="281.2" cy="353.3" r="1.5" fill="#1a1310"/><circle cx="253.8" cy="346.1" r="1.5" fill="#3f3129"/><circle cx="322.0" cy="353.4" r="0.9" fill="#54443a"/><circle cx="335.3" cy="371.3" r="0.9" fill="#54443a"/><circle cx="249.5" cy="348.0" r="1.3" fill="#54443a"/><circle cx="378.9" cy="343.0" r="1.2" fill="#1a1310"/><circle cx="291.9" cy="365.1" r="0.9" fill="#54443a"/><circle cx="319.8" cy="337.1" r="1.4" fill="#1a1310"/><circle cx="267.0" cy="353.4" r="1.6" fill="#54443a"/><circle cx="356.6" cy="330.2" r="1.3" fill="#352a23"/><circle cx="343.4" cy="361.8" r="0.9" fill="#54443a"/><circle cx="325.6" cy="341.7" r="1.2" fill="#4a3a30"/><circle cx="252.1" cy="328.5" r="1.3" fill="#4a3a30"/><circle cx="240.3" cy="350.3" r="1.0" fill="#352a23"/><circle cx="286.3" cy="328.4" r="1.2" fill="#352a23"/><circle cx="252.3" cy="337.4" r="1.4" fill="#3f3129"/><circle cx="269.0" cy="323.6" r="0.8" fill="#1a1310"/><circle cx="254.0" cy="356.6" r="0.9" fill="#54443a"/><circle cx="322.4" cy="351.0" r="1.2" fill="#352a23"/><circle cx="343.5" cy="329.9" r="1.5" fill="#4a3a30"/><circle cx="260.2" cy="324.2" r="1.5" fill="#4a3a30"/><circle cx="262.3" cy="352.9" r="1.2" fill="#1a1310"/><circle cx="295.1" cy="353.2" r="1.2" fill="#4a3a30"/><circle cx="360.4" cy="361.7" r="1.1" fill="#1a1310"/><circle cx="331.6" cy="325.2" r="1.6" fill="#54443a"/><circle cx="283.0" cy="362.0" r="1.3" fill="#54443a"/><circle cx="340.2" cy="331.0" r="1.2" fill="#1a1310"/><circle cx="336.2" cy="372.7" r="1.6" fill="#54443a"/><circle cx="265.0" cy="370.3" r="0.7" fill="#54443a"/><circle cx="262.8" cy="324.2" r="1.5" fill="#3f3129"/><circle cx="365.8" cy="335.0" r="0.9" fill="#1a1310"/><circle cx="359.9" cy="348.3" r="1.1" fill="#352a23"/><circle cx="338.0" cy="368.9" r="1.1" fill="#1a1310"/><circle cx="267.5" cy="370.6" r="1.4" fill="#1a1310"/><circle cx="326.6" cy="319.0" r="1.5" fill="#3f3129"/><circle cx="326.5" cy="324.4" r="1.6" fill="#1a1310"/><circle cx="337.3" cy="354.6" r="1.3" fill="#1a1310"/><circle cx="347.8" cy="326.8" r="1.6" fill="#352a23"/><circle cx="355.4" cy="354.6" r="1.4" fill="#1a1310"/><circle cx="328.1" cy="344.5" r="0.8" fill="#1a1310"/><circle cx="263.2" cy="334.4" r="1.1" fill="#4a3a30"/><circle cx="285.3" cy="373.5" r="0.7" fill="#54443a"/><circle cx="323.5" cy="344.5" r="1.0" fill="#1a1310"/><circle cx="236.7" cy="340.4" r="1.1" fill="#4a3a30"/><circle cx="284.7" cy="359.1" r="1.2" fill="#3f3129"/><circle cx="340.6" cy="367.0" r="1.2" fill="#54443a"/><circle cx="262.7" cy="362.8" r="1.6" fill="#4a3a30"/><circle cx="284.9" cy="320.1" r="1.3" fill="#3f3129"/><circle cx="377.5" cy="347.0" r="1.2" fill="#3f3129"/><circle cx="275.1" cy="327.7" r="1.3" fill="#1a1310"/><circle cx="348.6" cy="345.4" r="1.6" fill="#352a23"/><circle cx="351.6" cy="354.2" r="1.0" fill="#1a1310"/><circle cx="345.3" cy="341.0" r="1.3" fill="#54443a"/><circle cx="263.3" cy="330.8" r="1.5" fill="#352a23"/><circle cx="327.9" cy="374.4" r="0.8" fill="#352a23"/><circle cx="346.7" cy="362.2" r="1.3" fill="#54443a"/><circle cx="320.4" cy="347.4" r="1.5" fill="#1a1310"/><circle cx="332.6" cy="361.5" r="0.9" fill="#1a1310"/><circle cx="336.7" cy="330.5" r="0.9" fill="#54443a"/><circle cx="302.2" cy="370.6" r="0.9" fill="#3f3129"/><circle cx="272.7" cy="362.3" r="1.4" fill="#352a23"/><circle cx="269.6" cy="334.9" r="1.2" fill="#3f3129"/><circle cx="332.0" cy="326.5" r="0.8" fill="#3f3129"/><circle cx="352.8" cy="360.9" r="1.1" fill="#3f3129"/><circle cx="274.7" cy="370.7" r="1.1" fill="#4a3a30"/><circle cx="292.7" cy="364.6" r="1.3" fill="#352a23"/><circle cx="268.8" cy="368.6" r="1.3" fill="#352a23"/><circle cx="345.9" cy="341.0" r="0.9" fill="#1a1310"/><circle cx="331.2" cy="370.2" r="1.3" fill="#352a23"/><circle cx="361.6" cy="357.5" r="1.3" fill="#1a1310"/><circle cx="297.7" cy="330.6" r="1.3" fill="#1a1310"/><circle cx="268.8" cy="339.6" r="1.3" fill="#3f3129"/><circle cx="270.0" cy="341.1" r="1.1" fill="#352a23"/><circle cx="362.5" cy="347.2" r="1.3" fill="#3f3129"/><circle cx="368.0" cy="335.0" r="0.7" fill="#1a1310"/><circle cx="270.2" cy="327.9" r="1.3" fill="#3f3129"/><circle cx="310.9" cy="320.5" r="1.2" fill="#352a23"/><circle cx="263.2" cy="344.4" r="0.7" fill="#54443a"/><circle cx="311.3" cy="340.3" r="1.6" fill="#3f3129"/><circle cx="310.1" cy="373.7" r="1.4" fill="#352a23"/><circle cx="286.0" cy="317.6" r="0.9" fill="#1a1310"/><circle cx="371.1" cy="354.2" r="1.3" fill="#352a23"/><circle cx="272.3" cy="328.4" r="1.4" fill="#352a23"/><circle cx="378.0" cy="343.6" r="0.8" fill="#4a3a30"/><circle cx="355.1" cy="354.6" r="1.1" fill="#352a23"/><circle cx="341.5" cy="366.1" r="0.8" fill="#1a1310"/><circle cx="329.1" cy="366.4" r="1.4" fill="#1a1310"/><circle cx="330.7" cy="363.9" r="1.1" fill="#3f3129"/><circle cx="272.6" cy="338.1" r="0.9" fill="#1a1310"/><circle cx="335.2" cy="344.8" r="1.4" fill="#54443a"/><circle cx="286.4" cy="355.9" r="1.0" fill="#1a1310"/><circle cx="297.1" cy="354.8" r="1.3" fill="#54443a"/><circle cx="255.2" cy="333.4" r="1.0" fill="#4a3a30"/><circle cx="351.2" cy="323.0" r="1.4" fill="#1a1310"/><circle cx="320.5" cy="356.1" r="0.9" fill="#4a3a30"/><circle cx="331.7" cy="330.0" r="0.8" fill="#3f3129"/><circle cx="300.7" cy="364.2" r="0.9" fill="#1a1310"/><circle cx="352.3" cy="324.7" r="1.5" fill="#352a23"/><circle cx="369.0" cy="349.1" r="1.3" fill="#54443a"/><circle cx="262.0" cy="358.3" r="1.2" fill="#1a1310"/><circle cx="359.6" cy="357.0" r="0.8" fill="#4a3a30"/><circle cx="272.2" cy="329.0" r="0.8" fill="#1a1310"/><circle cx="316.7" cy="345.0" r="1.5" fill="#1a1310"/><circle cx="306.7" cy="345.9" r="1.2" fill="#1a1310"/><circle cx="303.1" cy="350.0" r="1.3" fill="#1a1310"/><circle cx="289.0" cy="340.8" r="1.6" fill="#4a3a30"/><circle cx="259.4" cy="337.1" r="1.3" fill="#4a3a30"/><circle cx="324.7" cy="357.7" r="1.5" fill="#54443a"/><circle cx="305.6" cy="362.5" r="0.8" fill="#3f3129"/><circle cx="341.2" cy="354.0" r="1.0" fill="#1a1310"/><circle cx="287.7" cy="344.4" r="1.2" fill="#3f3129"/><circle cx="275.2" cy="335.9" r="0.9" fill="#4a3a30"/><circle cx="357.7" cy="332.7" r="1.4" fill="#1a1310"/><circle cx="364.7" cy="336.1" r="0.9" fill="#1a1310"/><circle cx="352.4" cy="335.2" r="1.0" fill="#54443a"/><circle cx="292.6" cy="349.5" r="1.1" fill="#352a23"/><circle cx="372.1" cy="353.0" r="1.3" fill="#352a23"/><circle cx="370.3" cy="353.2" r="1.3" fill="#1a1310"/><circle cx="334.4" cy="358.1" r="1.5" fill="#4a3a30"/><circle cx="264.3" cy="356.7" r="1.1" fill="#3f3129"/><circle cx="370.9" cy="356.0" r="1.0" fill="#3f3129"/><circle cx="351.6" cy="350.0" r="0.9" fill="#54443a"/><circle cx="235.1" cy="350.2" r="1.2" fill="#4a3a30"/><circle cx="307.7" cy="347.4" r="1.4" fill="#1a1310"/><circle cx="319.4" cy="372.8" r="1.1" fill="#4a3a30"/><circle cx="335.4" cy="352.0" r="1.6" fill="#1a1310"/><circle cx="294.7" cy="320.5" r="1.3" fill="#3f3129"/><circle cx="368.2" cy="354.1" r="1.1" fill="#4a3a30"/><circle cx="335.9" cy="321.8" r="1.6" fill="#4a3a30"/><circle cx="265.2" cy="321.8" r="1.1" fill="#54443a"/><circle cx="341.3" cy="329.5" r="1.4" fill="#3f3129"/><circle cx="372.3" cy="337.4" r="1.4" fill="#1a1310"/><circle cx="362.0" cy="360.7" r="0.8" fill="#1a1310"/><circle cx="316.7" cy="345.9" r="1.3" fill="#54443a"/><circle cx="366.3" cy="357.9" r="1.3" fill="#1a1310"/><circle cx="279.3" cy="360.7" r="0.8" fill="#1a1310"/><circle cx="324.6" cy="334.2" r="1.6" fill="#1a1310"/><circle cx="298.7" cy="357.3" r="0.8" fill="#4a3a30"/><circle cx="287.2" cy="355.3" r="1.3" fill="#1a1310"/><circle cx="304.5" cy="363.8" r="1.1" fill="#54443a"/><circle cx="351.3" cy="350.3" r="1.0" fill="#4a3a30"/><circle cx="326.5" cy="355.7" r="1.4" fill="#352a23"/><circle cx="282.5" cy="352.8" r="1.6" fill="#3f3129"/><circle cx="323.4" cy="333.8" r="1.1" fill="#3f3129"/><circle cx="289.3" cy="357.8" r="1.2" fill="#3f3129"/><circle cx="354.7" cy="332.1" r="0.7" fill="#54443a"/><circle cx="272.7" cy="324.1" r="1.5" fill="#4a3a30"/><circle cx="275.9" cy="323.0" r="1.5" fill="#352a23"/><circle cx="353.2" cy="349.1" r="1.4" fill="#1a1310"/><circle cx="284.7" cy="319.4" r="1.2" fill="#1a1310"/><circle cx="262.5" cy="362.0" r="1.5" fill="#3f3129"/><circle cx="292.1" cy="359.3" r="1.5" fill="#352a23"/><circle cx="346.2" cy="364.7" r="1.1" fill="#4a3a30"/><circle cx="313.5" cy="336.7" r="0.8" fill="#1a1310"/><circle cx="320.1" cy="371.4" r="1.5" fill="#352a23"/><circle cx="280.8" cy="346.4" r="0.9" fill="#3f3129"/><circle cx="261.2" cy="325.6" r="1.3" fill="#54443a"/><circle cx="319.8" cy="337.0" r="1.4" fill="#3f3129"/><circle cx="307.0" cy="369.4" r="1.0" fill="#1a1310"/><circle cx="351.7" cy="324.0" r="1.2" fill="#54443a"/><circle cx="274.6" cy="352.9" r="0.8" fill="#3f3129"/><circle cx="305.9" cy="350.3" r="0.9" fill="#54443a"/><circle cx="296.7" cy="374.6" r="1.4" fill="#352a23"/><circle cx="239.8" cy="349.7" r="1.5" fill="#1a1310"/><circle cx="306.0" cy="368.1" r="1.5" fill="#352a23"/><circle cx="329.3" cy="373.0" r="1.3" fill="#4a3a30"/><circle cx="271.1" cy="350.1" r="1.3" fill="#1a1310"/><circle cx="309.0" cy="325.7" r="1.5" fill="#54443a"/><circle cx="270.9" cy="336.5" r="1.5" fill="#4a3a30"/><circle cx="351.5" cy="359.4" r="1.3" fill="#1a1310"/><circle cx="334.9" cy="333.1" r="1.2" fill="#1a1310"/><circle cx="248.0" cy="334.7" r="0.9" fill="#4a3a30"/><circle cx="289.0" cy="338.3" r="1.1" fill="#3f3129"/><circle cx="303.1" cy="372.4" r="1.4" fill="#3f3129"/><circle cx="300.0" cy="320.2" r="1.5" fill="#4a3a30"/><circle cx="327.5" cy="342.9" r="1.0" fill="#3f3129"/><circle cx="304.6" cy="354.2" r="0.8" fill="#3f3129"/><circle cx="343.9" cy="325.5" r="1.1" fill="#3f3129"/><circle cx="298.7" cy="323.6" r="1.1" fill="#3f3129"/><circle cx="255.7" cy="331.4" r="1.5" fill="#54443a"/><circle cx="354.2" cy="330.7" r="0.8" fill="#1a1310"/><circle cx="368.0" cy="356.8" r="0.9" fill="#1a1310"/><circle cx="297.7" cy="330.7" r="0.9" fill="#3f3129"/><circle cx="246.8" cy="332.5" r="1.5" fill="#4a3a30"/><circle cx="253.9" cy="354.9" r="1.1" fill="#352a23"/><circle cx="283.8" cy="323.0" r="0.7" fill="#352a23"/><circle cx="275.5" cy="337.0" r="0.7" fill="#1a1310"/><circle cx="265.2" cy="350.6" r="0.8" fill="#3f3129"/><circle cx="311.3" cy="328.7" r="0.9" fill="#352a23"/><circle cx="324.5" cy="345.7" r="0.9" fill="#3f3129"/><circle cx="252.8" cy="356.9" r="1.3" fill="#3f3129"/><circle cx="320.6" cy="326.9" r="0.8" fill="#1a1310"/><circle cx="311.0" cy="367.8" r="1.5" fill="#352a23"/><circle cx="355.2" cy="335.5" r="1.5" fill="#1a1310"/><circle cx="245.7" cy="340.2" r="1.4" fill="#3f3129"/><circle cx="364.5" cy="331.0" r="0.9" fill="#54443a"/><circle cx="319.4" cy="368.9" r="1.0" fill="#1a1310"/><circle cx="286.2" cy="329.7" r="1.4" fill="#54443a"/><circle cx="350.4" cy="369.6" r="1.2" fill="#4a3a30"/><circle cx="276.3" cy="320.9" r="1.4" fill="#1a1310"/><circle cx="310.0" cy="348.0" r="1.2" fill="#4a3a30"/><circle cx="326.1" cy="324.7" r="1.0" fill="#352a23"/><circle cx="246.7" cy="358.7" r="0.9" fill="#4a3a30"/><circle cx="359.3" cy="354.8" r="1.1" fill="#3f3129"/><circle cx="338.8" cy="320.6" r="1.5" fill="#1a1310"/><circle cx="259.2" cy="331.5" r="1.1" fill="#352a23"/><circle cx="308.1" cy="331.9" r="0.8" fill="#1a1310"/><circle cx="366.4" cy="348.7" r="0.9" fill="#3f3129"/><circle cx="254.4" cy="350.7" r="1.4" fill="#3f3129"/><circle cx="328.5" cy="358.4" r="1.2" fill="#352a23"/><circle cx="311.9" cy="339.3" r="1.5" fill="#54443a"/><circle cx="283.5" cy="329.4" r="1.0" fill="#1a1310"/><circle cx="360.1" cy="350.1" r="1.6" fill="#54443a"/><circle cx="355.9" cy="368.2" r="0.7" fill="#352a23"/><circle cx="254.3" cy="357.5" r="1.0" fill="#1a1310"/><circle cx="281.3" cy="326.9" r="1.3" fill="#3f3129"/><circle cx="328.2" cy="365.8" r="1.5" fill="#4a3a30"/><circle cx="237.2" cy="355.1" r="0.9" fill="#1a1310"/><circle cx="326.8" cy="354.2" r="1.4" fill="#4a3a30"/><circle cx="326.4" cy="330.0" r="1.2" fill="#1a1310"/><circle cx="249.2" cy="336.2" r="0.9" fill="#4a3a30"/><circle cx="322.3" cy="375.2" r="1.2" fill="#54443a"/><circle cx="244.8" cy="351.8" r="1.5" fill="#1a1310"/><circle cx="276.6" cy="340.0" r="1.0" fill="#3f3129"/><circle cx="343.9" cy="361.4" r="1.0" fill="#1a1310"/><circle cx="324.7" cy="350.5" r="1.3" fill="#3f3129"/><circle cx="315.4" cy="337.5" r="1.5" fill="#54443a"/><circle cx="325.1" cy="344.0" r="1.0" fill="#3f3129"/><circle cx="282.7" cy="326.1" r="1.2" fill="#352a23"/><circle cx="292.3" cy="373.1" r="0.8" fill="#3f3129"/><circle cx="281.2" cy="334.8" r="0.9" fill="#3f3129"/><circle cx="276.9" cy="363.4" r="0.8" fill="#4a3a30"/><circle cx="324.1" cy="336.3" r="1.3" fill="#352a23"/><circle cx="291.0" cy="342.2" r="1.4" fill="#4a3a30"/></g>
<circle cx="328" cy="409" r="1.8" fill="#7f4a33"/><circle cx="327" cy="413" r="1.5" fill="#7f4a33"/>
<path d="M305.0,342.0 C304.7,338.3 304.0,327.3 303.0,320.0 C302.0,312.7 300.2,306.0 299.0,298.0 C297.8,290.0 296.5,276.3 296.0,272.0" fill="none" stroke="#4f8a5c" stroke-width="1.6" stroke-linecap="round" />
<path d="M315.0,343.0 C315.2,338.8 315.3,326.5 316.0,318.0 C316.7,309.5 318.2,300.8 319.0,292.0 C319.8,283.2 320.7,269.5 321.0,265.0" fill="none" stroke="#5a9466" stroke-width="1.7" stroke-linecap="round" />
<path d="M327.0,344.0 C326.8,340.0 325.8,328.7 326.0,320.0 C326.2,311.3 327.3,301.2 328.0,292.0 C328.7,282.8 329.7,269.5 330.0,265.0" fill="none" stroke="#6a9e74" stroke-width="1.8" stroke-linecap="round" />
<path d="M336.0,343.0 C336.7,338.8 338.8,326.5 340.0,318.0 C341.2,309.5 342.0,300.0 343.0,292.0 C344.0,284.0 345.5,273.7 346.0,270.0" fill="none" stroke="#4f8a5c" stroke-width="1.6" stroke-linecap="round" />
<path d="M292.0,337.0 C291.2,334.5 288.7,326.5 287.0,322.0 C285.3,317.5 283.5,313.7 282.0,310.0 C280.5,306.3 278.7,301.7 278.0,300.0" fill="none" stroke="#3f7a50" stroke-width="1.8" stroke-linecap="round" />
<path d="M350.0,332.0 C351.7,328.7 356.3,318.7 360.0,312.0 C363.7,305.3 367.8,298.7 372.0,292.0 C376.2,285.3 382.8,275.3 385.0,272.0" fill="none" stroke="#5a9868" stroke-width="1.8" stroke-linecap="round" />
<path d="M300.0,336.0 C297.5,335.7 290.0,333.8 285.0,334.0 C280.0,334.2 274.8,335.7 270.0,337.0 C265.2,338.3 258.3,341.2 256.0,342.0" fill="none" stroke="#3e7a52" stroke-width="1.3" stroke-linecap="round" />
<path d="M304.8,282.0 C307.3,281.0 316.1,277.4 320.0,276.0 C323.9,274.6 323.8,273.8 328.3,273.6 C332.8,273.4 341.6,273.8 347.0,274.8 C352.4,275.8 354.7,278.0 361.0,279.5 C367.3,281.0 377.3,282.4 385.0,284.0 C392.7,285.6 403.3,288.2 407.0,289.0 C403.3,289.5 392.8,290.8 385.0,292.0 C377.2,293.2 368.3,295.3 360.0,296.0 C351.7,296.7 344.2,298.3 335.0,296.0 C325.8,293.7 309.8,284.3 304.8,282.0 Z" fill="#3a8658" />
<path d="M370.0,292.0 C373.3,291.8 384.2,290.3 390.0,291.0 C395.8,291.7 401.2,293.8 405.0,296.0 C408.8,298.2 410.2,300.2 413.0,304.0 C415.8,307.8 420.5,316.5 422.0,319.0 C420.0,317.3 414.5,311.5 410.0,309.0 C405.5,306.5 400.3,305.5 395.0,304.0 C389.7,302.5 382.2,302.0 378.0,300.0 C373.8,298.0 371.3,293.3 370.0,292.0 Z" fill="#358052" />
<path d="M330.0,331.0 C331.0,328.8 333.0,321.8 336.0,318.0 C339.0,314.2 342.7,310.0 348.0,308.0 C353.3,306.0 364.7,306.3 368.0,306.0 C366.0,307.7 360.0,312.7 356.0,316.0 C352.0,319.3 348.3,323.5 344.0,326.0 C339.7,328.5 332.3,330.2 330.0,331.0 Z" fill="#5f9e70" />
<path d="M293.0,331.0 C293.3,328.3 293.2,319.7 295.0,315.0 C296.8,310.3 300.8,305.5 304.0,303.0 C307.2,300.5 312.3,300.5 314.0,300.0 C313.2,302.0 310.8,308.0 309.0,312.0 C307.2,316.0 305.7,320.8 303.0,324.0 C300.3,327.2 294.7,329.8 293.0,331.0 Z" fill="#3a7a55" />
<path d="M318.0,300.0 C320.0,299.5 325.5,297.3 330.0,297.0 C334.5,296.7 340.0,297.2 345.0,298.0 C350.0,298.8 357.5,301.3 360.0,302.0 C357.5,302.5 350.0,304.3 345.0,305.0 C340.0,305.7 334.5,306.8 330.0,306.0 C325.5,305.2 320.0,301.0 318.0,300.0 Z" fill="#4a9062" />
<path d="M308.0,110.4 C308.5,113.1 309.9,121.6 311.2,126.6 C312.4,131.6 314.2,137.4 315.5,140.6 C316.8,143.8 317.9,142.9 318.8,146.0 C319.7,149.1 320.3,153.9 321.0,159.0 C321.7,164.1 322.3,169.8 323.0,176.3 C323.7,182.8 324.7,192.4 325.2,198.0 C325.7,203.6 325.9,208.0 326.0,210.0" fill="none" stroke="#c2483a" stroke-width="2.8" stroke-linecap="round" />
<path d="M316.6,149.3 C315.5,149.1 311.8,149.3 310.0,148.2 C308.2,147.1 305.8,144.0 305.8,142.8 C305.8,141.6 307.8,142.6 310.0,141.0 C312.2,139.4 315.9,135.2 318.8,133.0 C321.7,130.8 324.2,128.9 327.4,127.7 C330.6,126.5 334.6,125.5 338.2,125.5 C341.8,125.5 345.8,126.1 349.0,127.7 C352.2,129.3 354.7,131.8 357.6,135.2 C360.5,138.6 363.8,143.5 366.3,148.2 C368.8,152.9 371.2,158.3 372.8,163.3 C374.4,168.3 375.3,173.0 376.0,178.4 C376.7,183.8 377.2,190.3 377.0,195.7 C376.8,201.1 375.3,208.3 375.0,210.8 C373.6,209.3 369.6,205.6 366.3,202.0 C363.1,198.4 359.5,193.9 355.5,189.2 C351.5,184.5 346.5,178.7 342.5,174.0 C338.5,169.3 334.9,164.8 331.7,161.2 C328.4,157.6 325.5,154.5 323.0,152.5 C320.5,150.5 317.7,149.8 316.6,149.3 Z" fill="url(#sp3)" />
<path d="M328.0,140.0 C330.8,143.3 339.3,152.5 345.0,160.0 C350.7,167.5 357.5,177.5 362.0,185.0 C366.5,192.5 370.3,201.7 372.0,205.0" fill="none" stroke="#e88676" stroke-width="1.5" stroke-linecap="round" opacity="0.7"/>
<path d="M335.0,132.0 C338.3,135.0 349.5,142.8 355.0,150.0 C360.5,157.2 365.8,170.8 368.0,175.0" fill="none" stroke="#e98878" stroke-width="1.2" stroke-linecap="round" opacity="0.6"/>
<path d="M308.0,110.4 C308.5,113.1 309.9,121.6 311.2,126.6 C312.4,131.6 314.8,138.3 315.5,140.6" fill="none" stroke="#d65a44" stroke-width="3" stroke-linecap="round" />
<path d="M295.4,216.0 C296.6,210.5 301.7,206.9 304.8,204.4 C307.9,201.9 309.9,201.5 314.2,200.9 C318.5,200.3 324.7,201.1 330.6,200.9 C336.5,200.7 344.9,198.7 349.4,199.7 C353.9,200.7 356.2,204.0 357.6,206.7 C359.0,209.4 358.4,213.2 357.6,216.0 C356.8,218.8 352.6,220.0 353.0,223.2 C353.4,226.4 359.0,231.5 360.0,235.0 C361.0,238.5 361.0,241.2 358.8,244.3 C356.6,247.4 351.7,251.0 347.0,253.7 C342.3,256.4 336.5,259.1 330.6,260.7 C324.8,262.2 316.2,262.8 311.9,263.0 C307.6,263.2 306.4,263.6 304.8,262.0 C303.2,260.4 303.7,257.8 302.5,253.7 C301.3,249.6 299.0,243.6 297.8,237.3 C296.6,231.0 294.2,221.5 295.4,216.0 Z" fill="url(#sp2)" />
<path d="M315.0,210.0 C315.5,214.2 317.2,227.5 318.0,235.0 C318.8,242.5 319.7,251.7 320.0,255.0" fill="none" stroke="#e57364" stroke-width="1.2" stroke-linecap="round" opacity="0.3"/>
<path d="M335.0,207.0 C335.5,211.2 337.8,224.0 338.0,232.0 C338.2,240.0 336.3,251.2 336.0,255.0" fill="none" stroke="#e57364" stroke-width="1.2" stroke-linecap="round" opacity="0.3"/>
<path d="M351.8,218.5 C353.3,218.5 358.3,217.7 361.0,218.5 C363.7,219.3 365.4,221.4 368.2,223.2 C371.0,224.9 375.2,227.4 378.0,229.0 C380.8,230.6 383.8,232.3 385.0,233.0" fill="none" stroke="#d8694a" stroke-width="3.5" stroke-linecap="round" />
<path d="M259.0,219.6 C262.5,219.0 267.9,217.9 272.0,218.5 C276.1,219.1 280.2,220.8 283.7,223.2 C287.2,225.5 290.3,228.7 293.0,232.6 C295.7,236.5 298.0,241.5 300.0,246.6 C302.0,251.7 304.2,257.5 304.8,263.0 C305.4,268.5 304.8,274.4 303.6,279.5 C302.4,284.6 300.3,289.3 297.8,293.6 C295.3,297.9 291.9,302.2 288.4,305.3 C284.9,308.4 281.3,312.0 276.6,312.4 C271.9,312.8 265.3,310.4 260.2,307.7 C255.1,305.0 250.1,300.7 246.0,296.0 C241.9,291.3 238.1,285.0 235.6,279.5 C233.1,274.0 231.1,269.2 230.9,263.0 C230.7,256.8 232.5,247.8 234.4,242.0 C236.3,236.2 239.9,231.2 242.6,227.9 C245.3,224.6 248.1,223.4 250.8,222.0 C253.5,220.6 255.5,220.2 259.0,219.6 Z" fill="url(#sp1)" />
<path d="M248.0,232.0 C247.3,236.7 243.3,250.3 244.0,260.0 C244.7,269.7 250.7,285.0 252.0,290.0" fill="none" stroke="#de6458" stroke-width="1.2" stroke-linecap="round" opacity="0.3"/>
<path d="M262.0,226.0 C261.7,231.7 259.3,247.7 260.0,260.0 C260.7,272.3 265.0,293.3 266.0,300.0" fill="none" stroke="#de6458" stroke-width="1.2" stroke-linecap="round" opacity="0.3"/>
<path d="M280.0,228.0 C280.3,233.7 282.0,250.0 282.0,262.0 C282.0,274.0 280.3,293.7 280.0,300.0" fill="none" stroke="#de6458" stroke-width="1.2" stroke-linecap="round" opacity="0.3"/>
<path d="M292.0,240.0 C292.7,245.0 296.3,260.8 296.0,270.0 C295.7,279.2 291.0,290.8 290.0,295.0" fill="none" stroke="#de6458" stroke-width="1.2" stroke-linecap="round" opacity="0.3"/>
<path d="M259.0,219.0 C259.2,218.5 258.8,217.7 260.2,216.0 C261.6,214.3 265.2,210.9 267.3,209.0 C269.4,207.1 272.1,205.2 273.0,204.4" fill="none" stroke="#df6d58" stroke-width="4" stroke-linecap="round" />
<rect x="116" y="108.5" width="346" height="365" fill="none" stroke="#98a0dc" stroke-width="1.3"/>
<g fill="#fff" stroke="#8088d4" stroke-width="1.2">
<rect x="113.5" y="106" width="5" height="5"/><rect x="286.5" y="106" width="5" height="5"/><rect x="459.5" y="106" width="5" height="5"/>
<rect x="113.5" y="288.5" width="5" height="5"/><rect x="459.5" y="288.5" width="5" height="5"/>
<rect x="113.5" y="471" width="5" height="5"/><rect x="286.5" y="471" width="5" height="5"/><rect x="459.5" y="471" width="5" height="5"/>
</g>
</svg>

<!-- ============ DIALOG ============ -->
<div class="a" style="left:469px;top:163px;width:262px;height:238px;background:#4a4a4a;border:1px solid #1f1f1f"></div>
<div class="a" style="left:470px;top:164px;width:260px;height:9px;background:linear-gradient(#353535,#2c2c2c)"></div>
<div class="a" style="left:470px;top:173px;width:260px;height:11px;background:#2e2e2e"></div>
<div class="a" style="left:470px;top:172px;width:106px;height:12px;background:#4a4a4a"></div>
<svg style="left:708px;top:165px" width="22" height="7"><path d="M4.5 0.5L1.5 3.5 4.5 6.5zM8 0.5L5 3.5 8 6.5z" fill="#bbb"/><path d="M14 1L19 6M19 1L14 6" stroke="#bbb" stroke-width="1.2"/></svg>
<!-- icon row -->
<svg style="left:540px;top:193px" width="14" height="13"><g fill="none" stroke="#d8d8d8" stroke-width="1.2"><circle cx="9" cy="4" r="2.8"/><circle cx="4.5" cy="8.5" r="3"/></g><circle cx="9" cy="4" r="1" fill="#d8d8d8"/><circle cx="4.5" cy="8.5" r="1" fill="#d8d8d8"/></svg>
<svg style="left:562px;top:194px" width="12" height="11"><path d="M0.5 2.5h3l1-2h3l1 2h3v8h-11z" fill="#cfcfcf"/><circle cx="6" cy="6.3" r="2.2" fill="#555"/><circle cx="6" cy="6.3" r="1" fill="#ccc"/></svg>
<svg style="left:583px;top:193px" width="14" height="13"><rect x="0.5" y="0.5" width="13" height="12" fill="#555" stroke="#d0d0d0"/><path d="M2 3h2M5 3h2M8 3h2M2 5.5h3M6 5.5h6M2 8h10M2 10.5h10" stroke="#d8d8d8"/></svg>
<svg style="left:604px;top:193px" width="13" height="13"><defs><linearGradient id="g1" x1="0" x2="1"><stop offset="0" stop-color="#222"/><stop offset="1" stop-color="#ddd"/></linearGradient></defs><rect x="0.5" y="0.5" width="12" height="12" fill="url(#g1)" stroke="#d0d0d0"/></svg>
<svg style="left:626px;top:193px" width="13" height="13"><rect x="0.5" y="0.5" width="12" height="12" fill="#ddd" stroke="#d0d0d0"/><rect x="1" y="1" width="6" height="11" fill="#2a2a2a"/></svg>
<svg style="left:647px;top:193px" width="13" height="13"><path d="M1 2.5 L4 1 L7 4 a3.5 3.5 0 1 1 -2 5 L1 6 z" fill="none" stroke="#d0d0d0" stroke-width="1.3"/></svg>
<div class="a" style="left:470px;top:211px;width:260px;height:1px;background:#3b3b3b"></div>
<div class="a" style="left:470px;top:212px;width:260px;height:1px;background:#545454"></div>
<!-- dropdowns -->
<div class="dd" style="left:532px;top:219px;width:172px;height:14px"></div>
<div class="tri" style="left:694px;top:224px"></div>
<div class="dd" style="left:532px;top:240px;width:172px;height:13px"></div>
<div class="tri" style="left:694px;top:245px"></div>
<div class="dd" style="left:532px;top:260px;width:172px;height:14px"></div>
<div class="tri" style="left:694px;top:265px"></div>
<div class="dd" style="left:532px;top:279px;width:172px;height:14px"></div>
<div class="tri" style="left:694px;top:284px"></div>
<svg style="left:712px;top:222px" width="10" height="8"><path d="M0 1h10M0 4h10M0 7h10M2 1v6M5 1v6M8 1v6" stroke="#cfcfcf" stroke-width="1"/></svg>
<svg style="left:712px;top:244px" width="11" height="7"><ellipse cx="5.5" cy="3.5" rx="5" ry="3" fill="#d8d8d8"/><circle cx="5.5" cy="3.5" r="1.6" fill="#444"/></svg>
<!-- red annotations -->
<div class="a" style="left:528px;top:276px;width:53px;height:2px;background:#b3213a"></div>
<div class="a" style="left:529px;top:295px;width:62px;height:2px;background:#b3213a"></div>
<div class="a" style="left:531px;top:298px;width:60px;height:1px;background:#3f6c5a"></div>
<svg style="left:694px;top:309px" width="52" height="8"><path d="M2 5.5L50 3.5" stroke="#b3213a" stroke-width="1.6"/></svg>
<!-- slider -->
<div class="a" style="left:532px;top:304px;width:160px;height:3px;background:#262626;border-bottom:1px solid #5a5a5a"></div>
<svg style="left:685px;top:299px" width="9" height="10"><path d="M1.5 3.5L4.5 0.5 7.5 3.5v6h-6z" fill="#8a8a8a" stroke="#333"/></svg>
<div class="inp" style="left:699px;top:299px;width:26px;height:12px;background:#c4c4c4"></div>
<!-- advanced -->
<div class="a" style="left:470px;top:327px;width:260px;height:1px;background:#444"></div>
<svg style="left:478px;top:331px" width="6" height="7"><path d="M0.5 0.5L5 3.5 0.5 6.5z" fill="#ddd"/></svg>
<div class="a" style="left:470px;top:344px;width:260px;height:1px;background:#3c3c3c"></div>
<div class="a" style="left:470px;top:345px;width:260px;height:1px;background:#535353"></div>
<svg style="left:474px;top:355px" width="12" height="12"><circle cx="6" cy="6" r="5.5" fill="#cfcfcf"/><rect x="5.1" y="5" width="1.8" height="4.5" fill="#555"/><circle cx="6" cy="3.2" r="1" fill="#555"/></svg>
<div class="a" style="left:470px;top:378px;width:260px;height:1px;background:#3c3c3c"></div>
<div class="a" style="left:470px;top:379px;width:260px;height:1px;background:#535353"></div>
<div class="a" style="left:474px;top:385px;width:8px;height:8px;background:#5c5c5c;border:1px solid #2c2c2c"></div>
<div class="btn" style="left:658px;top:382px;width:67px;height:14px"></div>

<!-- vertical scrollbar -->
<div class="a" style="left:814px;top:63px;width:13px;height:457px;background:#3e3e3e"></div>
<div class="tri" style="left:817px;top:66px;border-top:0;border-bottom:5px solid #f0f0f0;border-left-width:3.5px;border-right-width:3.5px"></div>
<div class="a" style="left:815px;top:285px;width:11px;height:11px;background:#a9a9a9"></div>
<div class="tri" style="left:817px;top:512px;border-top-width:5px;border-left-width:3.5px;border-right-width:3.5px;border-top-color:#f0f0f0"></div>
<!-- status bar -->
<div class="a" style="left:54px;top:520px;width:774px;height:13px;background:#3a3a3a"></div>
<div class="inp" style="left:57px;top:521px;width:32px;height:12px;background:#bfbfbf;border:0"></div>
<div class="a" style="left:89px;top:521px;width:10px;height:12px;background:#4e4e4e"></div>
<div class="tri" style="left:91px;top:526px"></div>
<svg style="left:104px;top:523px" width="60" height="8"><path d="M3 0v7M9 0.5L4 3.5 9 6.5z M20 0.5L15 3.5 20 6.5z" fill="#666" stroke="#666" stroke-width="1"/></svg>
<div class="inp" style="left:130px;top:521px;width:31px;height:12px;background:#bfbfbf;border:0"></div>
<div class="a" style="left:161px;top:521px;width:10px;height:12px;background:#4e4e4e"></div>
<div class="tri" style="left:164px;top:526px"></div>
<svg style="left:178px;top:523px" width="30" height="8"><path d="M2 0.5L7 3.5 2 6.5z M13 0.5L18 3.5 13 6.5z M19 0v7" fill="#666" stroke="#666" stroke-width="1"/></svg>
<div class="a" style="left:230px;top:521px;width:122px;height:12px;background:#424242"></div>
<svg style="left:352px;top:523px" width="30" height="10"><path d="M2 0.5L6 3.5 2 6.5z" fill="#eee"/><path d="M21 0.5L17 3.5 21 6.5z" fill="#eee"/></svg>
<div class="a" style="left:372px;top:520px;width:440px;height:13px;background:#2e2e2e"></div>
<div class="a" style="left:578px;top:521px;width:12px;height:12px;background:#9a9a9a"></div>
<svg style="left:804px;top:523px" width="10" height="10"><path d="M1 0.5L6 3.5 1 6.5z" fill="#eee"/></svg>
<div class="a" style="left:812px;top:520px;width:16px;height:13px;background:#3a3a3a"></div>

<!-- ============ TOOLS ============ -->
<div class="a" style="left:0;top:47px;width:54px;height:486px;background:#3c3c3c"></div><div class="a" style="left:50px;top:57px;width:4px;height:476px;background:#353535;border-right:2px solid #2a2a2a"></div>
<div class="a" style="left:0;top:47px;width:54px;height:10px;background:#2d2d2d"></div>
<svg style="left:3px;top:49px" width="10" height="6"><path d="M4 0.5L1 3 4 5.5zM8 0.5L5 3 8 5.5z" fill="#bbb"/></svg>
<div class="a" style="left:4px;top:57px;width:46px;height:476px;background:#484848;border-left:1px solid #555"></div>
<div class="a" style="left:19px;top:60px;width:17px;height:2px;background:#2a2a2a"></div>
<div class="a" style="left:5px;top:70px;width:20px;height:16px;background:#333;border:1px solid #2a2a2a"></div>
<svg style="left:0;top:0" width="54" height="533">
<g fill="none" stroke="#d6d6d6" stroke-width="1.25" stroke-linejoin="round" stroke-linecap="round">
<!-- r1 selection -->
<path d="M11 71.5v11l3-2.5 2 4 2-1-2-4h4z"/>
<path d="M34 71.5v11l3-2.5 2 4 2-1-2-4h4z" fill="#bdbdbd"/>
<!-- r2 magic wand, lasso -->
<path d="M17 101l-6-6"/><path d="M10 89v3M8.5 90.5h3M13 91l1.5-1.5M8 93.5l-1 1" stroke-width="1.3"/>
<path d="M33 94c0-3 2.5-5 5.5-5s5.5 2 5.5 4.5-2.5 4-5.5 4c-2 0-3.5-1-4-1.5M36 96l-1 6M39 97l2 4" />
<!-- r3 pen, T -->
<path d="M10 119l2-6 4-4 3 3-4 4z"/><circle cx="14" cy="115" r="1"/><path d="M15.5 108.5l3.5 3.5"/>
<path d="M33 107.5h10M38 107.5v11M36 118.5h4M33 107.5v2M43 107.5v2" stroke-width="1.5"/>
<!-- r4 line, rect -->
<path d="M10 137l9-10"/>
<!-- r5 brush, pencil -->
<path d="M19 144l-6 6.5M11 151c-1 2-1 3-2 4 2 0 4-1 4.5-3z" stroke-width="1.3"/>
<path d="M33 155l1-4 8-8 3 3-8 8z M40 145l3 3"/>
<!-- r6 blob, eraser -->
<path d="M9 172l1-5 5-2 4-3 2 2-5 5v3z" fill="#9a9a9a"/>
<path d="M33 170l6-6h5l1 2-6 6h-5z" fill="#a8a8a8"/>
<!-- r7 rotate, scale -->
<path d="M10 186a5 5 0 1 1 3 4.5" stroke-dasharray="1.6 1"/><path d="M13 180l2 1.5-2 1.5"/>
<rect x="33" y="183" width="7" height="6"/><path d="M36 180h8v7"/>
<!-- r8 warp, free transform -->
<path d="M9 209c2 0 2-3 4-4s3 2 5 0M11 206c1-2 3-2 3-4 0-1 2-1 2 1" stroke-width="1.3"/>
<path d="M33 198l5 5-5 4z" fill="#bbb"/><path d="M39 198h1M42 198h2v2M44 203v2M44 208h-2M39 208h1" />
<!-- r9 shape builder, perspective -->
<ellipse cx="14" cy="220" rx="5" ry="3.5"/><path d="M15 222l5 5-1 2"/>
<path d="M33 215l6 2v11l-6-2zM39 217l5-1v11l-5 1M33 220h11M33 224h11"/>
<!-- r10 mesh, gradient -->
<path d="M9 234h11v11h-11zM9 238c3 1 7-1 11 0M9 241.5c3 1 7-1 11 0M13 234c1 3-1 8 0 11M16.5 234c1 3-1 8 0 11"/>
<!-- r11 eyedropper, blend -->
<path d="M10 265l6-7M15 256l3-3 2 2-3 3z"/><path d="M11 264l-1.5 1.5"/>
<rect x="32" y="252" width="7" height="7"/><circle cx="40" cy="259" r="3.5"/><circle cx="41" cy="261" r="3" fill="#888"/>
<!-- r12 symbol sprayer, graph -->
<rect x="10" y="271" width="9" height="11" rx="1.5"/><circle cx="14.5" cy="277" r="2.3"/><path d="M12.5 269h4"/>
<path d="M33 282h12M34 282v-8M37 282v-5M40 282v-9M43 282v-6M34 282v-8h1v8M37 282v-5h1v5M40 282v-9h1v9M43 282v-6h1v6"/>
<!-- r13 artboard, slice -->
<rect x="10" y="290" width="9" height="8" fill="#7a7a7a"/><path d="M8 290h1M8 298h1M20 290h1M20 298h1M10 288v1M19 288v1M10 299v1M19 299v1"/>
<path d="M33 301l4-2 8-8-1-1-8 6z" fill="#bbb"/>
<!-- r14 hand, zoom -->
<path d="M11 317c-1-2-2-4-2-6l1-.5 2 3v-7h1.5v6-7h1.5v7-6.5h1.5v6.5-5h1.5v8c0 2-1 3-2.5 3h-3z" fill="#9a9a9a"/>
<circle cx="37" cy="310.5" r="3.8"/><path d="M40 313.5l4 4" stroke-width="2"/>
</g>
<rect x="31.5" y="126.5" width="12" height="10" fill="#8c8c8c" stroke="#cfcfcf"/>
<rect x="33" y="246" width="11" height="10" fill="url(#tg)"/>
<defs><linearGradient id="tg" x1="0" x2="1"><stop offset="0" stop-color="#eee"/><stop offset="1" stop-color="#444"/></linearGradient></defs>
<g fill="#d0d0d0">
<circle cx="23.5" cy="120.5" r="0.8"/><circle cx="46" cy="85" r="0.8"/><circle cx="46" cy="120.5" r="0.8"/><circle cx="46" cy="102.5" r="0.8"/>
<circle cx="23.5" cy="138.5" r="0.8"/><circle cx="46" cy="138.5" r="0.8"/><circle cx="46" cy="156.5" r="0.8"/><circle cx="46" cy="174.5" r="0.8"/>
<circle cx="23.5" cy="192.5" r="0.8"/><circle cx="46" cy="192.5" r="0.8"/><circle cx="23.5" cy="210.5" r="0.8"/><circle cx="23.5" cy="228.5" r="0.8"/><circle cx="46" cy="228.5" r="0.8"/>
<circle cx="23.5" cy="264.5" r="0.8"/><circle cx="46" cy="264.5" r="0.8"/><circle cx="23.5" cy="282.5" r="0.8"/><circle cx="46" cy="282.5" r="0.8"/><circle cx="46" cy="300.5" r="0.8"/><circle cx="23.5" cy="318.5" r="0.8"/>
</g>
<!-- separator lines -->
<path d="M5 322.5h45" stroke="#3a3a3a"/>
<!-- fill/stroke -->
<rect x="5.5" y="325.5" width="23" height="26" fill="#444" stroke="#2e2e2e"/>
<rect x="17.5" y="337.5" width="27" height="27" fill="#fff" stroke="#2b2b2b"/>
<rect x="24.5" y="345.5" width="11" height="10" fill="#555" stroke="#222"/>
<path d="M18 364L44 338" stroke="#e0202a" stroke-width="1.6"/>
<path d="M14 333c0-2 4-2 4 0s-3 1-2 3" stroke="#cfcfcf" fill="none" stroke-width="1"/>
<rect x="6" y="352" width="5" height="5" fill="#fff" stroke="#222"/><rect x="8" y="355" width="4" height="4" fill="#222" stroke="#ddd" stroke-width="0.8"/>
<!-- 3 buttons -->
<rect x="7" y="371" width="11" height="10" fill="#262626"/><rect x="10" y="374" width="5" height="4" fill="#777"/>
<rect x="21.5" y="371" width="11" height="10" fill="url(#tg)"/>
<rect x="36" y="371" width="11" height="10" fill="#fff" stroke="#222"/><path d="M36.5 380.5L46.5 371.5" stroke="#e0202a" stroke-width="1.8"/>
<!-- draw modes -->
<rect x="6" y="388" width="13" height="12" fill="#383838"/><rect x="21" y="388" width="13" height="12" fill="#444"/><rect x="36" y="388" width="13" height="12" fill="#4b4b4b"/>
<g fill="none" stroke="#cfcfcf" stroke-width="1"><circle cx="12" cy="394" r="3.5"/><circle cx="27.5" cy="394" r="3.5"/><circle cx="42.5" cy="394" r="3.5" stroke="#666"/></g>
<rect x="14" y="394" width="4" height="4" fill="#ddd"/>
<!-- screen mode -->
<rect x="21" y="407" width="11" height="8" fill="#8a8a8a" stroke="#cfcfcf"/><rect x="17" y="410" width="10" height="8" fill="#6a6a6a" stroke="#cfcfcf"/>
</svg>

<!-- ============ RIGHT PANEL ============ -->
<div class="a" style="left:826px;top:47px;width:174px;height:486px;background:#333"></div>
<div class="a" style="left:828px;top:47px;width:172px;height:10px;background:#2d2d2d"></div>
<svg style="left:990px;top:50px" width="9" height="6"><path d="M1 0.5L4 3 1 5.5zM5 0.5L8 3 5 5.5z" fill="#ccc"/></svg>
<!-- swatches panel -->
<div class="a" style="left:829px;top:57px;width:169px;height:101px;background:#484848"></div>
<div class="a" style="left:829px;top:57px;width:169px;height:13px;background:#3b3b3b"></div>
<div class="a" style="left:829px;top:57px;width:42px;height:13px;background:#4a4a4a"></div>
<div class="a" style="left:904px;top:58px;width:1px;height:12px;background:#333"></div>
<div class="a" style="left:946px;top:58px;width:1px;height:12px;background:#333"></div>
<div class="a" style="left:831px;top:72px;width:164px;height:73px;background:#454545;border:1px solid #353535"></div>
<div class="a" style="left:986px;top:73px;width:8px;height:71px;background:#3e3e3e"></div>
<div class="tri" style="left:988px;top:78px;border-top:0;border-bottom:3px solid #888;border-left-width:2.5px;border-right-width:2.5px"></div>
<div class="tri" style="left:988px;top:136px;border-top-width:3px;border-left-width:2.5px;border-right-width:2.5px;border-top-color:#888"></div>
<svg style="left:832px;top:74px" width="22" height="11"><rect x="0.5" y="0.5" width="9" height="10" fill="#fff" stroke="#8a2030"/><path d="M1 10L9 1" stroke="#d02030" stroke-width="1.6"/><rect x="10.5" y="0.5" width="10" height="10" fill="#dcdcdc" stroke="#666"/><circle cx="13" cy="3" r="1.5" fill="none" stroke="#2a7a4a"/><circle cx="18" cy="3" r="1.5" fill="none" stroke="#2a7a4a"/><circle cx="13" cy="8" r="1.5" fill="none" stroke="#2a7a4a"/><circle cx="18" cy="8" r="1.5" fill="none" stroke="#2a7a4a"/></svg>
<svg style="left:834px;top:147px" width="150" height="10"><g fill="none" stroke="#d0d0d0" stroke-width="1"><path d="M1 9V2l3-1v8M5 9V3l2 .5L9 9M10 9h2"/></g>
<rect x="59.5" y="0.5" width="10" height="8" fill="#ccc" stroke="#444"/><rect x="61" y="2" width="7" height="2" fill="#444"/><path d="M70 8h2" stroke="#ccc"/>
<rect x="80" y="1" width="7" height="8" fill="#666"/>
<rect x="99" y="1" width="10" height="8" fill="#cfcfcf"/><rect x="99" y="0" width="4" height="2" fill="#cfcfcf"/>
<rect x="119" y="1" width="7" height="8" fill="#5e5e5e"/>
<rect x="138" y="2" width="8" height="7" fill="#5a5a5a"/></svg>
<!-- stroke panel -->
<div class="a" style="left:829px;top:160px;width:169px;height:38px;background:#484848"></div>
<div class="a" style="left:829px;top:160px;width:169px;height:13px;background:#3b3b3b"></div>
<div class="a" style="left:829px;top:160px;width:46px;height:13px;background:#4a4a4a"></div>
<div class="a" style="left:913px;top:161px;width:1px;height:12px;background:#333"></div>
<svg style="left:831px;top:163px" width="5" height="8"><path d="M2.5 0.5L4.5 3H0.5zM2.5 7.5L4.5 5H0.5z" fill="#ddd"/></svg>
<div class="a" style="left:870px;top:179px;width:9px;height:13px;background:#5a5a5a;border:1px solid #333"></div>
<div class="tri" style="left:872px;top:181px;border-top:0;border-bottom:3px solid #ddd;border-left-width:2.5px;border-right-width:2.5px"></div>
<div class="tri" style="left:872px;top:187px;border-top-width:3px;border-left-width:2.5px;border-right-width:2.5px;border-top-color:#ddd"></div>
<div class="a" style="left:879px;top:179px;width:39px;height:13px;background:#a8a8a8;border:1px solid #333"></div>
<div class="a" style="left:918px;top:179px;width:11px;height:13px;background:#5c5c5c;border:1px solid #333"></div>
<div class="tri" style="left:920px;top:184px;border-left-width:3.5px;border-right-width:3.5px;border-top-width:4px"></div>
<!-- graphic styles panel -->
<div class="a" style="left:829px;top:200px;width:169px;height:204px;background:#484848"></div>
<div class="a" style="left:829px;top:200px;width:169px;height:12px;background:#3b3b3b"></div>
<div class="a" style="left:887px;top:200px;width:64px;height:12px;background:#4a4a4a"></div>
<div class="a" style="left:831px;top:214px;width:164px;height:177px;background:#454545;border:1px solid #353535"></div>
<div class="a" style="left:986px;top:215px;width:8px;height:175px;background:#3e3e3e"></div>
<div class="tri" style="left:988px;top:220px;border-top:0;border-bottom:3px solid #888;border-left-width:2.5px;border-right-width:2.5px"></div>
<div class="tri" style="left:988px;top:383px;border-top-width:3px;border-left-width:2.5px;border-right-width:2.5px;border-top-color:#888"></div>
<div class="a" style="left:832px;top:216px;width:24px;height:24px;background:#fff;border:1px solid #999"></div>
<div class="a" style="left:835px;top:219px;width:18px;height:18px;border:1px solid #bbb"></div>
<svg style="left:834px;top:229px" width="8" height="9"><rect x="0.5" y="0.5" width="5" height="5" fill="#fff" stroke="#222"/><rect x="2.5" y="3" width="4.5" height="5" fill="#222" stroke="#222"/></svg>
<svg style="left:834px;top:393px" width="150" height="10"><g fill="none" stroke="#d0d0d0" stroke-width="1"><path d="M1 9V2l3-1v8M5 9V3l2 .5L9 9M10 9h2"/></g>
<rect x="94" y="2" width="15" height="6" fill="#575757"/>
<rect x="118" y="1" width="8" height="8" fill="#dcdcdc"/><rect x="118" y="1" width="4" height="4" fill="#888"/>
<rect x="136" y="1" width="10" height="8" fill="#585858"/></svg>
<!-- layers panel -->
<div class="a" style="left:829px;top:406px;width:169px;height:127px;background:#484848"></div>
<div class="a" style="left:829px;top:406px;width:169px;height:14px;background:#3b3b3b"></div>
<div class="a" style="left:829px;top:406px;width:26px;height:14px;background:#4a4a4a"></div>
<div class="a" style="left:941px;top:407px;width:1px;height:13px;background:#333"></div>
<div class="a" style="left:831px;top:422px;width:164px;height:96px;background:#454545;border:1px solid #353535"></div>
<div class="a" style="left:832px;top:424px;width:162px;height:16px;background:#596073"></div>
<div class="a" style="left:847px;top:424px;width:1px;height:16px;background:#454a58"></div>
<div class="a" style="left:862px;top:424px;width:1px;height:16px;background:#454a58"></div>
<div class="a" style="left:864px;top:425px;width:2px;height:14px;background:#3c78e0"></div>
<div class="a" style="left:969px;top:424px;width:1px;height:16px;background:#454a58"></div>
<svg style="left:834px;top:428px" width="12" height="8"><path d="M1 4c2-3 8-3 10 0-2 3-8 3-10 0z" fill="none" stroke="#d8d8d8"/><circle cx="6" cy="4" r="1.5" fill="#d8d8d8"/></svg>
<svg style="left:871px;top:428px" width="7" height="8"><path d="M0.5 0.5L6 4 0.5 7.5z" fill="#eee"/></svg>
<div class="a" style="left:882px;top:424px;width:14px;height:16px;background:#fff"></div>
<svg style="left:883px;top:425px" width="12" height="14"><path d="M6 14V7M2 3l4 4 4-4" stroke="#3a5a3a" stroke-width="2" fill="none"/><circle cx="3" cy="4" r="2" fill="#b84b3a"/><circle cx="8.5" cy="3" r="2" fill="#b84b3a"/><rect x="3" y="9" width="6" height="4" fill="#8a5a3a"/></svg>
<svg style="left:971px;top:427px" width="25" height="12"><circle cx="5.5" cy="6" r="3.5" fill="none" stroke="#cfcfcf"/><rect x="13.5" y="1.5" width="8" height="8" fill="#1e3f8a" stroke="#9ab"/><rect x="15.5" y="4" width="4" height="3" fill="#ccd"/></svg>
<svg style="left:989px;top:424px" width="6" height="6"><path d="M0 0h6v6z" fill="#eee"/></svg>
<div class="a" style="left:829px;top:518px;width:169px;height:15px;background:#484848"></div>
<svg style="left:895px;top:520px" width="100" height="12"><circle cx="7" cy="4.5" r="3.5" fill="none" stroke="#e8e8e8" stroke-width="1.2"/><path d="M4.5 7L1 11" stroke="#e8e8e8" stroke-width="1.5"/>
<rect x="19" y="2" width="7" height="7" fill="#5a5a5a"/>
<path d="M35 3h3v5h4M39 2h6M40 5h5M40 8h5" stroke="#ddd" stroke-width="1"/>
<rect x="56" y="1" width="8" height="9" fill="#ddd"/><rect x="58" y="3" width="4" height="2" fill="#555"/>
<rect x="75" y="2" width="9" height="8" fill="#585858"/></svg>
<svg style="left:986px;top:59px" width="12" height="8"><path d="M0.5 2.5h4l-2 3z" fill="#ddd"/><rect x="6" y="0.5" width="5.5" height="7" fill="#5a5a5a"/><path d="M6.5 2h4.5M6.5 4h4.5M6.5 6h4.5" stroke="#aaa" stroke-width="0.8"/></svg>
<svg style="left:986px;top:163px" width="12" height="8"><path d="M0.5 2.5h4l-2 3z" fill="#ddd"/><rect x="6" y="0.5" width="5.5" height="7" fill="#5a5a5a"/><path d="M6.5 2h4.5M6.5 4h4.5M6.5 6h4.5" stroke="#aaa" stroke-width="0.8"/></svg>
<svg style="left:986px;top:202px" width="12" height="8"><path d="M0.5 2.5h4l-2 3z" fill="#ddd"/><rect x="6" y="0.5" width="5.5" height="7" fill="#5a5a5a"/><path d="M6.5 2h4.5M6.5 4h4.5M6.5 6h4.5" stroke="#aaa" stroke-width="0.8"/></svg>
<svg style="left:986px;top:409px" width="12" height="8"><path d="M0.5 2.5h4l-2 3z" fill="#ddd"/><rect x="6" y="0.5" width="5.5" height="7" fill="#5a5a5a"/><path d="M6.5 2h4.5M6.5 4h4.5M6.5 6h4.5" stroke="#aaa" stroke-width="0.8"/></svg>

<div class="t" style="left:33.83px;top:6.96px;font-size:9.5px;color:#e6e6e6;transform:scaleX(0.931);">Файл</div>
<div class="t" style="left:66.43px;top:6.96px;font-size:9.5px;color:#e6e6e6;transform:scaleX(0.936);">Редактирование</div>
<div class="t" style="left:146.23px;top:6.96px;font-size:9.5px;color:#e6e6e6;transform:scaleX(0.925);">Объект</div>
<div class="t" style="left:189.43px;top:6.96px;font-size:9.5px;color:#e6e6e6;transform:scaleX(0.884);">Текст</div>
<div class="t" style="left:223.03px;top:6.96px;font-size:9.5px;color:#e6e6e6;transform:scaleX(0.897);">Выделение</div>
<div class="t" style="left:280.43px;top:6.96px;font-size:9.5px;color:#e6e6e6;transform:scaleX(0.829);">Эффект</div>
<div class="t" style="left:324.43px;top:6.96px;font-size:9.5px;color:#e6e6e6;transform:scaleX(0.948);">Просмотр</div>
<div class="t" style="left:378.13px;top:6.96px;font-size:9.5px;color:#e6e6e6;transform:scaleX(0.994);">Окно</div>
<div class="t" style="left:411.43px;top:6.96px;font-size:9.5px;color:#e6e6e6;transform:scaleX(0.916);">Справка</div>
<div class="t" style="left:716.73px;top:6.56px;font-size:9.5px;color:#dcdcdc;transform:scaleX(0.925);">Основные сведения</div>
<div class="t" style="left:9.52px;top:31.73px;font-size:8px;color:#e0e0e0;transform:scaleX(0.925);">Трассировка изображения</div>
<div class="t" style="left:106.52px;top:31.73px;font-size:8px;color:#e0e0e0;transform:scaleX(0.960);">Стиль:</div>
<div class="t" style="left:138.02px;top:31.73px;font-size:8px;color:#d8d8d8;transform:scaleX(0.960);">Заказной</div>
<div class="t" style="left:225.52px;top:31.73px;font-size:8px;color:#e0e0e0;transform:scaleX(0.966);">Просмотр:</div>
<div class="t" style="left:270.52px;top:31.73px;font-size:8px;color:#d8d8d8;transform:scaleX(0.943);">Результат трассировки</div>
<div class="t" style="left:457.02px;top:31.73px;font-size:8px;color:#e0e0e0;transform:scaleX(0.963);">Разобрать</div>
<div class="t" style="left:596.52px;top:31.73px;font-size:8px;color:#2a2a2a;transform:scaleX(0.926);">45,43 mm</div>
<div class="t" style="left:666.52px;top:31.73px;font-size:8px;color:#2a2a2a;transform:scaleX(0.831);">192,931 mm</div>
<div class="t" style="left:739.02px;top:31.73px;font-size:8px;color:#2a2a2a;transform:scaleX(0.923);">83,333 mm</div>
<div class="t" style="left:832.52px;top:31.73px;font-size:8px;color:#2a2a2a;transform:scaleX(0.923);">88,083 mm</div>
<div class="t" style="left:60.23px;top:50.76px;font-size:9.5px;color:#ececec;font-weight:bold;transform:scaleX(0.850);">c3ahce70c3fa3.jpg* @ 200% (RGB/Просмотр)</div>
<div class="t" style="left:475.29px;top:174.80px;font-size:8.5px;color:#e8e8e8;transform:scaleX(0.915);">Трассировка изображения</div>
<div class="t" style="left:504.99px;top:221.80px;font-size:8.5px;color:#dedede;transform:scaleX(0.905);">Стиль:</div>
<div class="t" style="left:536.09px;top:221.30px;font-size:8.5px;color:#d4d4d4;transform:scaleX(0.878);">Заказной</div>
<div class="t" style="left:492.89px;top:242.80px;font-size:8.5px;color:#dedede;transform:scaleX(0.875);">Просмотр:</div>
<div class="t" style="left:536.09px;top:242.30px;font-size:8.5px;color:#d4d4d4;transform:scaleX(0.911);">Результат трассировки</div>
<div class="t" style="left:503.49px;top:263.30px;font-size:8.5px;color:#dedede;transform:scaleX(0.893);">Режим:</div>
<div class="t" style="left:536.49px;top:262.80px;font-size:8.5px;color:#d4d4d4;transform:scaleX(0.946);">Цвет</div>
<div class="t" style="left:496.49px;top:282.30px;font-size:8.5px;color:#dedede;transform:scaleX(0.883);">Палитра:</div>
<div class="t" style="left:537.29px;top:281.80px;font-size:8.5px;color:#d4d4d4;transform:scaleX(0.860);">Полнотоновая</div>
<div class="t" style="left:505.09px;top:300.80px;font-size:8.5px;color:#dedede;transform:scaleX(0.899);">Цвета:</div>
<div class="t" style="left:701.49px;top:301.30px;font-size:8.5px;color:#222;transform:scaleX(0.918);">100</div>
<div class="t" style="left:531.49px;top:312.80px;font-size:8.5px;color:#dedede;transform:scaleX(0.860);">Меньше</div>
<div class="t" style="left:666.19px;top:312.80px;font-size:8.5px;color:#dedede;transform:scaleX(0.847);">Больше</div>
<div class="t" style="left:488.49px;top:329.30px;font-size:8.5px;color:#dedede;transform:scaleX(0.899);">Дополнительно</div>
<div class="t" style="left:492.39px;top:350.80px;font-size:8.5px;color:#dedede;transform:scaleX(0.899);">Контуры:</div>
<div class="t" style="left:552.19px;top:350.80px;font-size:8.5px;color:#dedede;transform:scaleX(0.788);">10560</div>
<div class="t" style="left:492.49px;top:363.80px;font-size:8.5px;color:#dedede;transform:scaleX(0.885);">Опорные точки:</div>
<div class="t" style="left:552.19px;top:363.80px;font-size:8.5px;color:#dedede;transform:scaleX(0.788);">76132</div>
<div class="t" style="left:628.39px;top:350.80px;font-size:8.5px;color:#dedede;transform:scaleX(0.899);">Цвета:</div>
<div class="t" style="left:656.39px;top:350.80px;font-size:8.5px;color:#dedede;transform:scaleX(0.868);">7362</div>
<div class="t" style="left:485.19px;top:384.30px;font-size:8.5px;color:#dedede;transform:scaleX(0.879);">Предварительный просмотр</div>
<div class="t" style="left:668.99px;top:385.80px;font-size:8.5px;color:#e4e4e4;transform:scaleX(0.890);">Трассировка</div>
<div class="t" style="left:832.52px;top:61.23px;font-size:8px;color:#f0f0f0;font-weight:bold;transform:scaleX(0.990);">Образцы</div>
<div class="t" style="left:875.52px;top:61.23px;font-size:8px;color:#bdbdbd;transform:scaleX(1.080);">Кисти</div>
<div class="t" style="left:909.02px;top:61.23px;font-size:8px;color:#bdbdbd;transform:scaleX(0.981);">Символы</div>
<div class="t" style="left:835.52px;top:164.73px;font-size:8px;color:#f0f0f0;font-weight:bold;transform:scaleX(0.990);">Обводка</div>
<div class="t" style="left:878.02px;top:164.73px;font-size:8px;color:#bdbdbd;transform:scaleX(1.000);">Градиент</div>
<div class="t" style="left:919.02px;top:164.73px;font-size:8px;color:#bdbdbd;transform:scaleX(0.993);">Прозрачность</div>
<div class="t" style="left:831.02px;top:182.73px;font-size:8px;color:#e4e4e4;transform:scaleX(0.947);">Толщина:</div>
<div class="t" style="left:832.02px;top:203.73px;font-size:8px;color:#bdbdbd;transform:scaleX(0.966);">Оформление</div>
<div class="t" style="left:890.52px;top:203.73px;font-size:8px;color:#f0f0f0;font-weight:bold;transform:scaleX(0.952);">Стили графики</div>
<div class="t" style="left:832.52px;top:411.73px;font-size:8px;color:#f0f0f0;font-weight:bold;transform:scaleX(1.044);">Слои</div>
<div class="t" style="left:861.52px;top:411.73px;font-size:8px;color:#bdbdbd;transform:scaleX(1.003);">Монтажные области</div>
<div class="t" style="left:899.49px;top:428.80px;font-size:8.5px;color:#eeeeee;transform:scaleX(0.865);">Слой 1</div>
<div class="t" style="left:832.02px;top:522.73px;font-size:8px;color:#e8e8e8;transform:scaleX(0.902);">1 слой</div>
<div class="t" style="left:58.52px;top:523.73px;font-size:8px;color:#222;transform:scaleX(0.975);">200%</div>
<div class="t" style="left:132.52px;top:523.73px;font-size:8px;color:#222;transform:scaleX(0.889);">1</div>
<div class="t" style="left:235.52px;top:523.23px;font-size:8px;color:#dcdcdc;transform:scaleX(0.933);">Выделенный фрагмент</div>
</body></html>
